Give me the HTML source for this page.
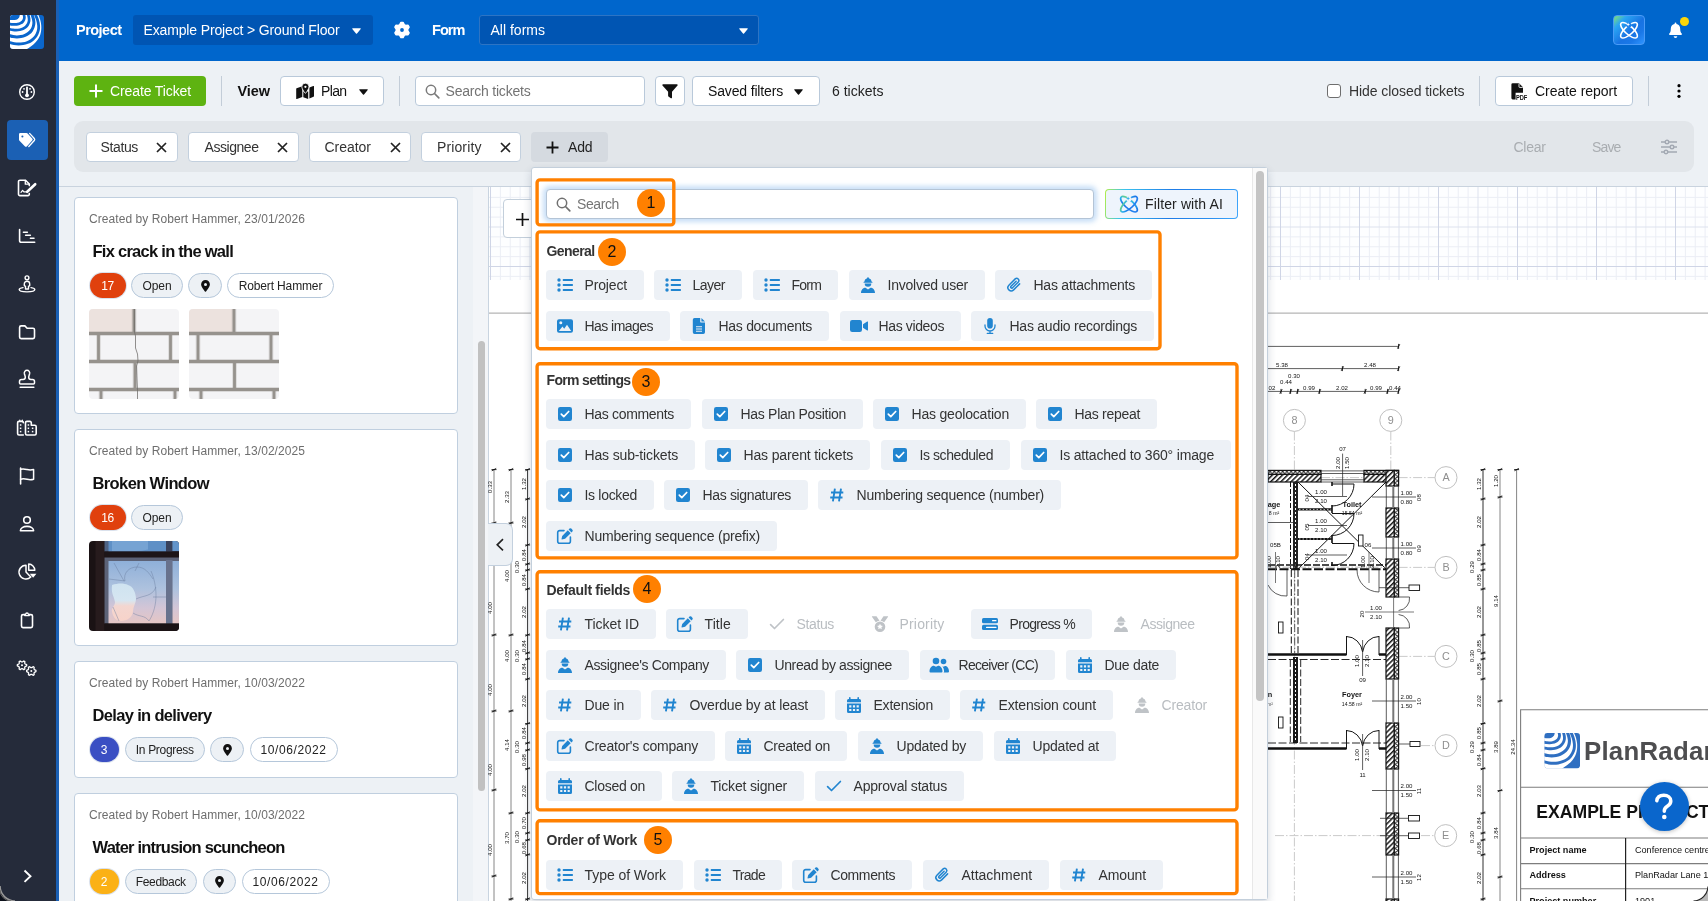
<!DOCTYPE html><html><head><meta charset="utf-8"><title>Tickets</title><style>
*{box-sizing:border-box;margin:0;padding:0}
html,body{width:1708px;height:901px;overflow:hidden;background:#edf1f5;font-family:"Liberation Sans",sans-serif;color:#252525}
body{position:relative}
#wrap{position:absolute;left:0;top:0;width:1708px;height:901px;overflow:hidden;will-change:transform}
.abs{position:absolute}
.t{position:absolute;white-space:nowrap;line-height:1}
svg{display:block;overflow:visible}
#side{left:0;top:0;width:56px;height:901px;background:#252b3a}
#strip{left:56px;top:0;width:3px;height:901px;background:#1b60b4}
#top{left:59px;top:0;width:1649px;height:61px;background:#0066cc}
.sel{background:#0055b3;border-radius:3px;height:30px;top:15px}
.btn{background:#fff;border:1px solid #b9c9da;border-radius:4px;height:30px;top:76px}
.sep{width:1px;background:#c3cdd8;top:76px;height:30px}
#fbar{left:74px;top:121px;width:1620px;height:51px;background:#e2e6ea;border-radius:9px}
.fchip{background:#fff;border:1px solid #c3d0de;border-radius:4px;height:30px;top:132px}
.card{background:#fff;border:1px solid #c0cfdf;border-radius:4px;left:74px;width:384px}
.pill{height:25px;border-radius:13px;border:1px solid #b5c7da;background:#edf1f5}
.pill.w{background:#fff}
.chip{position:absolute;height:30px;border-radius:4px;background:#edf1f6;color:#333}
.chip.dis{background:transparent;color:#b9bdc1}
.chip .ic{position:absolute;left:11px;top:7px;width:16px;height:16px;color:#2185d0;fill:currentColor}
.chip.dis .ic{color:#bfc3c7}
.chip .tx{position:absolute;left:38.500px;top:0;line-height:30px;white-space:nowrap}
.num{position:absolute;width:28px;height:28px;border-radius:14px;background:#ff8000;color:#111;text-align:center;line-height:27.500px;font-size:16px}
.hd{position:absolute;white-space:nowrap;line-height:1;color:#333}
</style></head><body><div id="wrap"><div class="abs" style="left:488px;top:187px;width:1220px;height:714px;background:#fff;border-left:1px solid #c9d4e0"></div><svg class="abs" style="left:489px;top:187px" width="1219" height="93" viewBox="489 187 1219 93"><rect x="489" y="187" width="1219" height="93" fill="#fdfeff"/><path d="M500.38 187V280M510.25 187V280M520.12 187V280M539.88 187V280M549.75 187V280M559.62 187V280M579.38 187V280M589.25 187V280M599.12 187V280M618.88 187V280M628.75 187V280M638.62 187V280M658.38 187V280M668.25 187V280M678.12 187V280M697.88 187V280M707.75 187V280M717.62 187V280M737.38 187V280M747.25 187V280M757.12 187V280M776.88 187V280M786.75 187V280M796.62 187V280M816.38 187V280M826.25 187V280M836.12 187V280M855.88 187V280M865.75 187V280M875.62 187V280M895.38 187V280M905.25 187V280M915.12 187V280M934.88 187V280M944.75 187V280M954.62 187V280M974.38 187V280M984.25 187V280M994.12 187V280M1013.88 187V280M1023.75 187V280M1033.62 187V280M1053.38 187V280M1063.25 187V280M1073.12 187V280M1092.88 187V280M1102.75 187V280M1112.62 187V280M1132.38 187V280M1142.25 187V280M1152.12 187V280M1171.88 187V280M1181.75 187V280M1191.62 187V280M1211.38 187V280M1221.25 187V280M1231.12 187V280M1250.88 187V280M1260.75 187V280M1270.62 187V280M1290.38 187V280M1300.25 187V280M1310.12 187V280M1329.88 187V280M1339.75 187V280M1349.62 187V280M1369.38 187V280M1379.25 187V280M1389.12 187V280M1408.88 187V280M1418.75 187V280M1428.62 187V280M1448.38 187V280M1458.25 187V280M1468.12 187V280M1487.88 187V280M1497.75 187V280M1507.62 187V280M1527.38 187V280M1537.25 187V280M1547.12 187V280M1566.88 187V280M1576.75 187V280M1586.62 187V280M1606.38 187V280M1616.25 187V280M1626.12 187V280M1645.88 187V280M1655.75 187V280M1665.62 187V280M1685.38 187V280M1695.25 187V280M1705.12 187V280M489 197.38H1708M489 207.25H1708M489 217.12H1708M489 236.88H1708M489 246.75H1708M489 256.62H1708M489 276.38H1708" stroke="#ebeef5" stroke-width="1" fill="none"/><path d="M530.00 187V280M609.00 187V280M688.00 187V280M767.00 187V280M846.00 187V280M925.00 187V280M1004.00 187V280M1083.00 187V280M1162.00 187V280M1241.00 187V280M1320.00 187V280M1399.00 187V280M1478.00 187V280M1557.00 187V280M1636.00 187V280M489 227.00H1708" stroke="#dde2ee" stroke-width="1" fill="none"/><path d="M490.50 187V280M569.50 187V280M648.50 187V280M727.50 187V280M806.50 187V280M885.50 187V280M964.50 187V280M1043.50 187V280M1122.50 187V280M1201.50 187V280M1280.50 187V280M1359.50 187V280M1438.50 187V280M1517.50 187V280M1596.50 187V280M1675.50 187V280M489 266.50H1708" stroke="#cfd5e6" stroke-width="1" fill="none"/></svg><div class="abs" style="left:503px;top:199px;width:38px;height:39px;background:#fff;border:1px solid #c3cfdb;border-radius:4px"></div><svg class="abs" style="left:515.500px;top:212.500px" width="13" height="13" viewBox="0 0 13 13"><path d="M6.500 0v13M0 6.500h13" stroke="#111" stroke-width="1.700" fill="none"/></svg><svg class="abs" style="left:489px;top:281px" width="1219" height="620" viewBox="489 281 1219 620" font-family="Liberation Sans, sans-serif"><defs><pattern id="hat" width="3.600" height="3.600" patternUnits="userSpaceOnUse" patternTransform="rotate(-45)"><rect width="3.600" height="3.600" fill="#fff"/><rect width="3.600" height="1.500" fill="#1a1a1a"/></pattern><pattern id="ins" width="4.200" height="4" patternUnits="userSpaceOnUse" x="1268" y="470.400"><rect width="4.200" height="4" fill="#fff"/><path d="M0 4L2.100 0.300L4.200 4" stroke="#1a1a1a" stroke-width=".9" fill="none"/></pattern><pattern id="insv" width="4.300" height="4.200" patternUnits="userSpaceOnUse" x="1394.300" y="470.400"><rect width="4.300" height="4.200" fill="#fff"/><path d="M0 0L4 2.100L0 4.200" stroke="#1a1a1a" stroke-width=".9" fill="none"/></pattern></defs><path d="M489 313.200H1708" stroke="#b5b5b5" stroke-width="1.200"/><path d="M1268 346.400H1398.600M1268 368.600H1398.600M1268 391.400H1398.600" stroke="#2a2a2a" stroke-width=".75" fill="none"/><path d="M1397.3999999999999 348.59999999999997L1399.8 344.2M1398.6 343.9V348.9M1341.2 370.8L1343.6000000000001 366.40000000000003M1342.4 366.1V371.1M1397.3999999999999 370.8L1399.8 366.40000000000003M1398.6 366.1V371.1M1279.8 393.59999999999997L1282.2 389.2M1281 388.9V393.9M1289.3999999999999 393.59999999999997L1291.8 389.2M1290.6 388.9V393.9M1296.3999999999999 393.59999999999997L1298.8 389.2M1297.6 388.9V393.9M1318.3999999999999 393.59999999999997L1320.8 389.2M1319.6 388.9V393.9M1364.0 393.59999999999997L1366.4 389.2M1365.2 388.9V393.9M1386.3999999999999 393.59999999999997L1388.8 389.2M1387.6 388.9V393.9M1397.3999999999999 393.59999999999997L1399.8 389.2M1398.6 388.9V393.9" stroke="#111" stroke-width=".9" fill="none"/><text x="1282" y="367" font-size="6.1" text-anchor="middle" fill="#151515">5.38</text><text x="1370" y="367" font-size="6.1" text-anchor="middle" fill="#151515">2.48</text><text x="1272" y="390" font-size="6.1" text-anchor="middle" fill="#151515">02</text><text x="1286" y="384" font-size="6.1" text-anchor="middle" fill="#151515">0.44</text><text x="1294" y="377.5" font-size="6.1" text-anchor="middle" fill="#151515">0.30</text><text x="1309" y="390" font-size="6.1" text-anchor="middle" fill="#151515">0.99</text><text x="1342" y="390" font-size="6.1" text-anchor="middle" fill="#151515">2.02</text><text x="1376" y="390" font-size="6.1" text-anchor="middle" fill="#151515">0.99</text><text x="1395" y="390" font-size="6.1" text-anchor="middle" fill="#151515">0.44</text><circle cx="1294.4" cy="420.4" r="11" fill="#fff" stroke="#b9b9b9" stroke-width=".9"/><text x="1294.4" y="424.2" font-size="10.8" text-anchor="middle" fill="#8f8f8f">8</text><circle cx="1390.8" cy="420.4" r="11" fill="#fff" stroke="#b9b9b9" stroke-width=".9"/><text x="1390.8" y="424.2" font-size="10.8" text-anchor="middle" fill="#8f8f8f">9</text><circle cx="1446" cy="477.6" r="11" fill="#fff" stroke="#b9b9b9" stroke-width=".9"/><text x="1446" y="481.40000000000003" font-size="10.8" text-anchor="middle" fill="#8f8f8f">A</text><circle cx="1446" cy="567.4" r="11" fill="#fff" stroke="#b9b9b9" stroke-width=".9"/><text x="1446" y="571.1999999999999" font-size="10.8" text-anchor="middle" fill="#8f8f8f">B</text><circle cx="1446" cy="656.4" r="11" fill="#fff" stroke="#b9b9b9" stroke-width=".9"/><text x="1446" y="660.1999999999999" font-size="10.8" text-anchor="middle" fill="#8f8f8f">C</text><circle cx="1446" cy="745.6" r="11" fill="#fff" stroke="#b9b9b9" stroke-width=".9"/><text x="1446" y="749.4" font-size="10.8" text-anchor="middle" fill="#8f8f8f">D</text><circle cx="1445.7" cy="835.6" r="11" fill="#fff" stroke="#b9b9b9" stroke-width=".9"/><text x="1445.7" y="839.4" font-size="10.8" text-anchor="middle" fill="#8f8f8f">E</text><path d="M1294.400 431.500V901M1390.800 431.500V470M1398.600 477.600H1435M1321 477.600H1364M1398.600 567.400H1435M1398.600 656.400H1435M1421 745.600H1435M1275 835.600H1386M1421 835.600H1435" stroke="#c4c4c4" stroke-width=".9" fill="none" stroke-dasharray="9 2 1.500 2"/><path d="M1483 469V901" stroke="#1a1a1a" stroke-width=".9" fill="none"/><path d="M1500 469V901M1516.600 469V901" stroke="#444" stroke-width=".65" fill="none"/><path d="M1480.8 470.8L1485.2 468.40000000000003M1480.5 469.6H1485.5M1480.8 500.2L1485.2 497.8M1480.5 499H1485.5M1480.8 546.2L1485.2 543.8M1480.5 545H1485.5M1480.8 565.2L1485.2 562.8M1480.5 564H1485.5M1480.8 571.2L1485.2 568.8M1480.5 570H1485.5M1480.8 590.2L1485.2 587.8M1480.5 589H1485.5M1480.8 636.2L1485.2 633.8M1480.5 635H1485.5M1480.8 654.2L1485.2 651.8M1480.5 653H1485.5M1480.8 660.2L1485.2 657.8M1480.5 659H1485.5M1480.8 680.2L1485.2 677.8M1480.5 679H1485.5M1480.8 724.8000000000001L1485.2 722.4M1480.5 723.6H1485.5M1480.8 744.2L1485.2 741.8M1480.5 743H1485.5M1480.8 751.2L1485.2 748.8M1480.5 750H1485.5M1480.8 769.9000000000001L1485.2 767.5M1480.5 768.7H1485.5M1480.8 814.2L1485.2 811.8M1480.5 813H1485.5M1480.8 834.2L1485.2 831.8M1480.5 833H1485.5M1480.8 841.2L1485.2 838.8M1480.5 840H1485.5M1480.8 856.0L1485.2 853.5999999999999M1480.5 854.8H1485.5M1480.8 900.2L1485.2 897.8M1480.5 899H1485.5M1497.8 470.8L1502.2 468.40000000000003M1497.5 469.6H1502.5M1497.8 498.2L1502.2 495.8M1497.5 497H1502.5M1497.8 702.2L1502.2 699.8M1497.5 701H1502.5M1497.8 791.8000000000001L1502.2 789.4M1497.5 790.6H1502.5M1497.8 878.2L1502.2 875.8M1497.5 877H1502.5M1514.3999999999999 470.8L1518.8 468.40000000000003M1514.1 469.6H1519.1" stroke="#111" stroke-width=".9" fill="none"/><text x="1481" y="484" font-size="6.1" text-anchor="middle" fill="#151515" transform="rotate(-90 1481 484)">1.32</text><text x="1481" y="522" font-size="6.1" text-anchor="middle" fill="#151515" transform="rotate(-90 1481 522)">2.02</text><text x="1481" y="555" font-size="6.1" text-anchor="middle" fill="#151515" transform="rotate(-90 1481 555)">0.84</text><text x="1474" y="567" font-size="6.1" text-anchor="middle" fill="#151515" transform="rotate(-90 1474 567)">0.29</text><text x="1481" y="580" font-size="6.1" text-anchor="middle" fill="#151515" transform="rotate(-90 1481 580)">0.85</text><text x="1481" y="612" font-size="6.1" text-anchor="middle" fill="#151515" transform="rotate(-90 1481 612)">2.02</text><text x="1481" y="646" font-size="6.1" text-anchor="middle" fill="#151515" transform="rotate(-90 1481 646)">0.85</text><text x="1474" y="656" font-size="6.1" text-anchor="middle" fill="#151515" transform="rotate(-90 1474 656)">0.30</text><text x="1481" y="669" font-size="6.1" text-anchor="middle" fill="#151515" transform="rotate(-90 1481 669)">0.85</text><text x="1481" y="701" font-size="6.1" text-anchor="middle" fill="#151515" transform="rotate(-90 1481 701)">2.02</text><text x="1481" y="733" font-size="6.1" text-anchor="middle" fill="#151515" transform="rotate(-90 1481 733)">0.85</text><text x="1474" y="747" font-size="6.1" text-anchor="middle" fill="#151515" transform="rotate(-90 1474 747)">0.29</text><text x="1481" y="760" font-size="6.1" text-anchor="middle" fill="#151515" transform="rotate(-90 1481 760)">0.84</text><text x="1481" y="791" font-size="6.1" text-anchor="middle" fill="#151515" transform="rotate(-90 1481 791)">2.03</text><text x="1481" y="823" font-size="6.1" text-anchor="middle" fill="#151515" transform="rotate(-90 1481 823)">0.84</text><text x="1474" y="837" font-size="6.1" text-anchor="middle" fill="#151515" transform="rotate(-90 1474 837)">0.30</text><text x="1481" y="848" font-size="6.1" text-anchor="middle" fill="#151515" transform="rotate(-90 1481 848)">0.68</text><text x="1481" y="878" font-size="6.1" text-anchor="middle" fill="#151515" transform="rotate(-90 1481 878)">2.02</text><text x="1498" y="481" font-size="6.1" text-anchor="middle" fill="#151515" transform="rotate(-90 1498 481)">1.20</text><text x="1498" y="601" font-size="6.1" text-anchor="middle" fill="#151515" transform="rotate(-90 1498 601)">9.14</text><text x="1498" y="747" font-size="6.1" text-anchor="middle" fill="#151515" transform="rotate(-90 1498 747)">3.89</text><text x="1498" y="833" font-size="6.1" text-anchor="middle" fill="#151515" transform="rotate(-90 1498 833)">3.84</text><text x="1514.6" y="747" font-size="6.1" text-anchor="middle" fill="#151515" transform="rotate(-90 1514.6 747)">24.34</text><path d="M527.600 469V901" stroke="#1a1a1a" stroke-width=".9" fill="none"/><path d="M494 469V901M511 469V901" stroke="#444" stroke-width=".65" fill="none"/><path d="M525.4 470.8L529.8000000000001 468.40000000000003M525.1 469.6H530.1M525.4 500.2L529.8000000000001 497.8M525.1 499H530.1M525.4 546.2L529.8000000000001 543.8M525.1 545H530.1M525.4 565.2L529.8000000000001 562.8M525.1 564H530.1M525.4 571.2L529.8000000000001 568.8M525.1 570H530.1M525.4 590.2L529.8000000000001 587.8M525.1 589H530.1M525.4 636.2L529.8000000000001 633.8M525.1 635H530.1M525.4 654.2L529.8000000000001 651.8M525.1 653H530.1M525.4 660.2L529.8000000000001 657.8M525.1 659H530.1M525.4 680.2L529.8000000000001 677.8M525.1 679H530.1M525.4 724.8000000000001L529.8000000000001 722.4M525.1 723.6H530.1M525.4 744.2L529.8000000000001 741.8M525.1 743H530.1M525.4 751.2L529.8000000000001 748.8M525.1 750H530.1M525.4 769.9000000000001L529.8000000000001 767.5M525.1 768.7H530.1M525.4 814.2L529.8000000000001 811.8M525.1 813H530.1M525.4 834.2L529.8000000000001 831.8M525.1 833H530.1M525.4 841.2L529.8000000000001 838.8M525.1 840H530.1M525.4 856.0L529.8000000000001 853.5999999999999M525.1 854.8H530.1M525.4 900.2L529.8000000000001 897.8M525.1 899H530.1M508.8 470.8L513.2 468.40000000000003M508.5 469.6H513.5M508.8 524.2L513.2 521.8M508.5 523H513.5M508.8 636.2L513.2 633.8M508.5 635H513.5M508.8 712.2L513.2 709.8M508.5 711H513.5M508.8 814.2L513.2 811.8M508.5 813H513.5M508.8 900.2L513.2 897.8M508.5 899H513.5M491.8 470.8L496.2 468.40000000000003M491.5 469.6H496.5M491.8 524.2L496.2 521.8M491.5 523H496.5M491.8 549.2L496.2 546.8M491.5 548H496.5M491.8 636.2L496.2 633.8M491.5 635H496.5M491.8 712.2L496.2 709.8M491.5 711H496.5M491.8 791.2L496.2 788.8M491.5 790H496.5M491.8 877.2L496.2 874.8M491.5 876H496.5" stroke="#111" stroke-width=".9" fill="none"/><text x="525.5" y="484" font-size="6.1" text-anchor="middle" fill="#151515" transform="rotate(-90 525.5 484)">1.32</text><text x="525.5" y="522" font-size="6.1" text-anchor="middle" fill="#151515" transform="rotate(-90 525.5 522)">2.02</text><text x="525.5" y="555" font-size="6.1" text-anchor="middle" fill="#151515" transform="rotate(-90 525.5 555)">0.84</text><text x="518.5" y="567" font-size="6.1" text-anchor="middle" fill="#151515" transform="rotate(-90 518.5 567)">0.30</text><text x="525.5" y="580" font-size="6.1" text-anchor="middle" fill="#151515" transform="rotate(-90 525.5 580)">0.84</text><text x="525.5" y="612" font-size="6.1" text-anchor="middle" fill="#151515" transform="rotate(-90 525.5 612)">2.02</text><text x="525.5" y="646" font-size="6.1" text-anchor="middle" fill="#151515" transform="rotate(-90 525.5 646)">0.84</text><text x="518.5" y="656" font-size="6.1" text-anchor="middle" fill="#151515" transform="rotate(-90 518.5 656)">0.30</text><text x="525.5" y="669" font-size="6.1" text-anchor="middle" fill="#151515" transform="rotate(-90 525.5 669)">0.84</text><text x="525.5" y="701" font-size="6.1" text-anchor="middle" fill="#151515" transform="rotate(-90 525.5 701)">2.02</text><text x="525.5" y="733" font-size="6.1" text-anchor="middle" fill="#151515" transform="rotate(-90 525.5 733)">0.84</text><text x="518.5" y="747" font-size="6.1" text-anchor="middle" fill="#151515" transform="rotate(-90 518.5 747)">0.30</text><text x="525.5" y="760" font-size="6.1" text-anchor="middle" fill="#151515" transform="rotate(-90 525.5 760)">0.98</text><text x="525.5" y="791" font-size="6.1" text-anchor="middle" fill="#151515" transform="rotate(-90 525.5 791)">2.02</text><text x="525.5" y="823" font-size="6.1" text-anchor="middle" fill="#151515" transform="rotate(-90 525.5 823)">0.70</text><text x="518.5" y="837" font-size="6.1" text-anchor="middle" fill="#151515" transform="rotate(-90 518.5 837)">0.30</text><text x="525.5" y="848" font-size="6.1" text-anchor="middle" fill="#151515" transform="rotate(-90 525.5 848)">0.68</text><text x="525.5" y="878" font-size="6.1" text-anchor="middle" fill="#151515" transform="rotate(-90 525.5 878)">2.02</text><text x="508.5" y="497" font-size="6.1" text-anchor="middle" fill="#151515" transform="rotate(-90 508.5 497)">2.33</text><text x="508.5" y="576" font-size="6.1" text-anchor="middle" fill="#151515" transform="rotate(-90 508.5 576)">4.00</text><text x="508.5" y="656" font-size="6.1" text-anchor="middle" fill="#151515" transform="rotate(-90 508.5 656)">4.00</text><text x="508.5" y="745" font-size="6.1" text-anchor="middle" fill="#151515" transform="rotate(-90 508.5 745)">4.14</text><text x="508.5" y="838" font-size="6.1" text-anchor="middle" fill="#151515" transform="rotate(-90 508.5 838)">3.70</text><text x="492" y="487" font-size="6.1" text-anchor="middle" fill="#151515" transform="rotate(-90 492 487)">0.33</text><text x="492" y="608" font-size="6.1" text-anchor="middle" fill="#151515" transform="rotate(-90 492 608)">4.00</text><text x="492" y="690" font-size="6.1" text-anchor="middle" fill="#151515" transform="rotate(-90 492 690)">4.00</text><text x="492" y="770" font-size="6.1" text-anchor="middle" fill="#151515" transform="rotate(-90 492 770)">4.00</text><text x="492" y="850" font-size="6.1" text-anchor="middle" fill="#151515" transform="rotate(-90 492 850)">4.00</text><rect x="1268" y="470.400" width="53" height="4" fill="url(#ins)" stroke="#111" stroke-width="1.200"/><rect x="1268" y="474.400" width="53" height="7.600" fill="url(#hat)" stroke="#111" stroke-width="1.200"/><rect x="1364" y="470.400" width="34.59999999999991" height="4" fill="url(#ins)" stroke="#111" stroke-width="1.200"/><rect x="1364" y="474.400" width="22.59999999999991" height="7.600" fill="url(#hat)" stroke="#111" stroke-width="1.200"/><path d="M1321 470.900H1364M1321 473.500H1364M1321 479.800H1364M1321 482H1364" stroke="#2a2a2a" stroke-width=".75" fill="none"/><rect x="1386" y="470.4" width="8.300" height="15.600000000000023" fill="url(#hat)" stroke="#111" stroke-width="1.200"/><rect x="1394.300" y="470.4" width="4.300" height="15.600000000000023" fill="url(#insv)" stroke="#111" stroke-width="1.200"/><rect x="1386" y="508" width="8.300" height="29" fill="url(#hat)" stroke="#111" stroke-width="1.200"/><rect x="1394.300" y="508" width="4.300" height="29" fill="url(#insv)" stroke="#111" stroke-width="1.200"/><rect x="1386" y="559" width="8.300" height="38" fill="url(#hat)" stroke="#111" stroke-width="1.200"/><rect x="1394.300" y="559" width="4.300" height="38" fill="url(#insv)" stroke="#111" stroke-width="1.200"/><rect x="1386" y="628" width="8.300" height="51" fill="url(#hat)" stroke="#111" stroke-width="1.200"/><rect x="1394.300" y="628" width="4.300" height="51" fill="url(#insv)" stroke="#111" stroke-width="1.200"/><rect x="1386" y="723" width="8.300" height="46" fill="url(#hat)" stroke="#111" stroke-width="1.200"/><rect x="1394.300" y="723" width="4.300" height="46" fill="url(#insv)" stroke="#111" stroke-width="1.200"/><rect x="1386" y="813" width="8.300" height="42" fill="url(#hat)" stroke="#111" stroke-width="1.200"/><rect x="1394.300" y="813" width="4.300" height="42" fill="url(#insv)" stroke="#111" stroke-width="1.200"/><rect x="1386" y="899" width="8.300" height="4" fill="url(#hat)" stroke="#111" stroke-width="1.200"/><rect x="1394.300" y="899" width="4.300" height="4" fill="url(#insv)" stroke="#111" stroke-width="1.200"/><path d="M1386.300 486V508M1398.400 486V508" stroke="#333" stroke-width=".8" fill="none"/><path d="M1393.300 486V508" stroke="#777" stroke-width="2" fill="none"/><path d="M1386.300 537V559M1398.400 537V559" stroke="#333" stroke-width=".8" fill="none"/><path d="M1393.300 537V559" stroke="#777" stroke-width="2" fill="none"/><path d="M1386.300 679V723M1398.400 679V723" stroke="#333" stroke-width=".8" fill="none"/><path d="M1393.300 679V723" stroke="#777" stroke-width="2" fill="none"/><path d="M1386.300 769V813M1398.400 769V813" stroke="#333" stroke-width=".8" fill="none"/><path d="M1393.300 769V813" stroke="#777" stroke-width="2" fill="none"/><path d="M1386.300 855V899M1398.400 855V899" stroke="#333" stroke-width=".8" fill="none"/><path d="M1393.300 855V899" stroke="#777" stroke-width="2" fill="none"/><path d="M1393.600 597V628" stroke="#555" stroke-width=".8"/><path d="M1398.600 597H1409.500M1409.500 597A12 12 0 0 1 1398.600 610.500M1398.600 628H1409.500M1409.500 628A12 12 0 0 0 1398.600 614.500" stroke="#2a2a2a" stroke-width=".75" fill="none"/><rect x="1293" y="482" width="5" height="87" fill="#222"/><path d="M1295.500 484V568" stroke="#fff" stroke-width="1" stroke-dasharray="2 2"/><path d="M1290.500 482V569" stroke="#111" stroke-width="1" stroke-dasharray="5 2"/><path d="M1298 509.400H1332M1298 539H1332" stroke="#111" stroke-width="2.200"/><path d="M1299 509.400H1332M1299 539H1332" stroke="#fff" stroke-width=".7" stroke-dasharray="1.500 2"/><path d="M1332 482V486M1332 505V513M1332 535V543M1332 562V566" stroke="#111" stroke-width="1.600"/><path d="M1298 482L1386 569M1386 482L1298 569" stroke="#151515" stroke-width="1" fill="none"/><path d="M1332 484H1354M1354 484A22 22 0 0 1 1332 506M1332 513.500H1354M1354 513.500A22 22 0 0 1 1332 535.500M1332 543.500H1354M1354 543.500A22 22 0 0 1 1332 565.500" stroke="#151515" stroke-width="1" fill="none"/><path d="M1268 565H1386" stroke="#111" stroke-width="1.600" stroke-dasharray="7 2"/><path d="M1268 569.300H1386" stroke="#111" stroke-width="2" stroke-dasharray="9 2.500"/><path d="M1268 567.200H1386" stroke="#999" stroke-width=".7" stroke-dasharray="9 2 1.500 2"/><path d="M1268 585A19 19 0 0 0 1287 596M1287 570V596M1379 570V592M1379 592A22 22 0 0 1 1357 570" stroke="#2a2a2a" stroke-width=".75" fill="none"/><path d="M1275.500 552V583M1369 552V583" stroke="#555" stroke-width=".8"/><path d="M1291.300 570V653M1298 570V653" stroke="#111" stroke-width="1" stroke-dasharray="7 2.500"/><path d="M1294.700 570V653" stroke="#333" stroke-width=".8" stroke-dasharray="8 2 1.500 2"/><rect x="1293" y="657" width="5" height="86" fill="#1a1a1a"/><path d="M1295.500 658V742" stroke="#fff" stroke-width="1" stroke-dasharray="2 2"/><path d="M1290.300 660V742M1300.700 660V742" stroke="#111" stroke-width=".9" stroke-dasharray="7 2.500"/><path d="M1268 654.500H1346.500M1379 654.500H1386" stroke="#111" stroke-width="2.600"/><path d="M1268 659.500H1386" stroke="#111" stroke-width=".9" stroke-dasharray="8 2.500"/><path d="M1346.500 636V655M1379 636V655M1346.500 636.500A16.500 18 0 0 1 1362.600 652M1379 636.500A16.500 18 0 0 0 1362.600 652" stroke="#151515" stroke-width="1" fill="none"/><path d="M1268 748.500H1346.500M1379 748.500H1386" stroke="#111" stroke-width="2.600"/><path d="M1268 743H1386" stroke="#111" stroke-width=".9" stroke-dasharray="8 2.500"/><path d="M1346.500 730V749M1379 730V749M1346.500 730.500A16.500 18 0 0 1 1362.600 746M1379 730.500A16.500 18 0 0 0 1362.600 746" stroke="#151515" stroke-width="1" fill="none"/><path d="M1362.600 640V676M1362.600 734V770M1342.600 453.600V496" stroke="#2a2a2a" stroke-width=".75" fill="none"/><text x="1342.6" y="450.5" font-size="6.1" text-anchor="middle" fill="#151515">07</text><text x="1339.5" y="463" font-size="6.1" text-anchor="middle" fill="#151515" transform="rotate(-90 1339.5 463)">2.00</text><text x="1349" y="463" font-size="6.1" text-anchor="middle" fill="#151515" transform="rotate(-90 1349 463)">1.50</text><text x="1352" y="506.5" font-size="7.3" text-anchor="middle" fill="#151515" font-weight="bold">Toilet</text><text x="1352" y="515" font-size="5.2" text-anchor="middle" fill="#151515">15.54 m²</text><text x="1274" y="506.5" font-size="7.3" text-anchor="middle" fill="#151515" font-weight="bold">age</text><text x="1274" y="515" font-size="5.2" text-anchor="middle" fill="#151515">8 m²</text><text x="1352" y="696.5" font-size="7.3" text-anchor="middle" fill="#151515" font-weight="bold">Foyer</text><text x="1352" y="706" font-size="5.2" text-anchor="middle" fill="#151515">14.58 m²</text><text x="1270" y="696.5" font-size="7.3" text-anchor="middle" fill="#151515" font-weight="bold">n</text><text x="1270" y="706" font-size="4.8" text-anchor="middle" fill="#555">m²</text><path d="M1308 496.5H1347" stroke="#2a2a2a" stroke-width=".75" fill="none"/><text x="1321" y="494.0" font-size="6.1" text-anchor="middle" fill="#151515">1.00</text><text x="1321" y="503.0" font-size="6.1" text-anchor="middle" fill="#151515">2.10</text><text x="1309" y="498.0" font-size="6.1" text-anchor="middle" fill="#151515" transform="rotate(-90 1309 498.0)">04</text><path d="M1308 525.5H1347" stroke="#2a2a2a" stroke-width=".75" fill="none"/><text x="1321" y="523.0" font-size="6.1" text-anchor="middle" fill="#151515">1.00</text><text x="1321" y="532.0" font-size="6.1" text-anchor="middle" fill="#151515">2.10</text><text x="1309" y="527.0" font-size="6.1" text-anchor="middle" fill="#151515" transform="rotate(-90 1309 527.0)">05</text><path d="M1308 555H1347" stroke="#2a2a2a" stroke-width=".75" fill="none"/><text x="1321" y="552.5" font-size="6.1" text-anchor="middle" fill="#151515">1.00</text><text x="1321" y="561.5" font-size="6.1" text-anchor="middle" fill="#151515">2.10</text><text x="1309" y="556.5" font-size="6.1" text-anchor="middle" fill="#151515" transform="rotate(-90 1309 556.5)">04</text><path d="M1372 497H1416" stroke="#2a2a2a" stroke-width=".75" fill="none"/><text x="1406.5" y="494.5" font-size="6.1" text-anchor="middle" fill="#151515">1.00</text><text x="1406.5" y="503.5" font-size="6.1" text-anchor="middle" fill="#151515">0.80</text><text x="1421" y="497.5" font-size="6.1" text-anchor="middle" fill="#151515" transform="rotate(-90 1421 497.5)">08</text><path d="M1372 548H1416" stroke="#2a2a2a" stroke-width=".75" fill="none"/><text x="1406.5" y="545.5" font-size="6.1" text-anchor="middle" fill="#151515">1.00</text><text x="1406.5" y="554.5" font-size="6.1" text-anchor="middle" fill="#151515">0.80</text><text x="1421" y="548.5" font-size="6.1" text-anchor="middle" fill="#151515" transform="rotate(-90 1421 548.5)">09</text><path d="M1372 701H1416" stroke="#2a2a2a" stroke-width=".75" fill="none"/><text x="1406.5" y="698.5" font-size="6.1" text-anchor="middle" fill="#151515">2.00</text><text x="1406.5" y="707.5" font-size="6.1" text-anchor="middle" fill="#151515">1.50</text><text x="1421" y="701.5" font-size="6.1" text-anchor="middle" fill="#151515" transform="rotate(-90 1421 701.5)">10</text><path d="M1372 790.5H1416" stroke="#2a2a2a" stroke-width=".75" fill="none"/><text x="1406.5" y="788.0" font-size="6.1" text-anchor="middle" fill="#151515">2.00</text><text x="1406.5" y="797.0" font-size="6.1" text-anchor="middle" fill="#151515">1.50</text><text x="1421" y="791.0" font-size="6.1" text-anchor="middle" fill="#151515" transform="rotate(-90 1421 791.0)">11</text><path d="M1372 877H1416" stroke="#2a2a2a" stroke-width=".75" fill="none"/><text x="1406.5" y="874.5" font-size="6.1" text-anchor="middle" fill="#151515">2.00</text><text x="1406.5" y="883.5" font-size="6.1" text-anchor="middle" fill="#151515">1.50</text><text x="1421" y="877.5" font-size="6.1" text-anchor="middle" fill="#151515" transform="rotate(-90 1421 877.5)">12</text><path d="M1365 612H1414" stroke="#444" stroke-width=".7"/><text x="1376" y="609.5" font-size="6.1" text-anchor="middle" fill="#151515">1.00</text><text x="1376" y="618.5" font-size="6.1" text-anchor="middle" fill="#151515">2.10</text><text x="1364" y="614" font-size="6.1" text-anchor="middle" fill="#151515" transform="rotate(-90 1364 614)">20</text><text x="1359" y="661" font-size="6.1" text-anchor="middle" fill="#151515" transform="rotate(-90 1359 661)">1.00</text><text x="1368.5" y="661" font-size="6.1" text-anchor="middle" fill="#151515" transform="rotate(-90 1368.5 661)">2.10</text><text x="1362.6" y="682" font-size="6.1" text-anchor="middle" fill="#151515">09</text><text x="1359" y="755" font-size="6.1" text-anchor="middle" fill="#151515" transform="rotate(-90 1359 755)">1.00</text><text x="1368.5" y="755" font-size="6.1" text-anchor="middle" fill="#151515" transform="rotate(-90 1368.5 755)">2.10</text><text x="1362.6" y="777" font-size="6.1" text-anchor="middle" fill="#151515">11</text><text x="1275.5" y="547" font-size="6.1" text-anchor="middle" fill="#151515">05B</text><text x="1271" y="562" font-size="6.1" text-anchor="middle" fill="#151515" transform="rotate(-90 1271 562)">1.00</text><text x="1280" y="562" font-size="6.1" text-anchor="middle" fill="#151515" transform="rotate(-90 1280 562)">2.10</text><text x="1368" y="547" font-size="6.1" text-anchor="middle" fill="#151515">06</text><text x="1365" y="562" font-size="6.1" text-anchor="middle" fill="#151515" transform="rotate(-90 1365 562)">1.00</text><text x="1374" y="562" font-size="6.1" text-anchor="middle" fill="#151515" transform="rotate(-90 1374 562)">2.10</text><rect x="1358.5" y="535" width="4.5" height="11" fill="#fff" stroke="#111" stroke-width=".9"/><rect x="1409" y="585" width="10.6" height="5.5" fill="#fff" stroke="#111" stroke-width=".9"/><rect x="1278.5" y="622" width="4.5" height="11" fill="#fff" stroke="#111" stroke-width=".9"/><rect x="1278.5" y="717" width="4.5" height="11" fill="#fff" stroke="#111" stroke-width=".9"/><rect x="1410" y="741.5" width="10" height="5" fill="#fff" stroke="#111" stroke-width=".9"/><rect x="1408.5" y="815.5" width="11" height="5.5" fill="#fff" stroke="#111" stroke-width=".9"/><rect x="1408.5" y="833" width="11" height="5.5" fill="#fff" stroke="#111" stroke-width=".9"/><path d="M1379 587.700H1409M1398.600 744H1410M1380 818.300H1408.500M1380 835.700H1408.500M1268 522.500H1293" stroke="#2a2a2a" stroke-width=".75" fill="none"/><path d="M1520.600 901V709.700H1708M1520.600 787.200H1708M1520.600 838H1708M1520.600 863.600H1708M1520.600 888.800H1708" stroke="#7d7d7d" stroke-width="1.100" fill="none"/><path d="M1625.600 838V901" stroke="#222" stroke-width="1.200"/><text x="1584" y="760.400" font-size="25.800" font-weight="bold" fill="#4e4e50" letter-spacing=".25">PlanRadar</text><text x="1536.300" y="818.300" font-size="17.600" font-weight="bold" fill="#111">EXAMPLE PROJECT</text><text x="1529.500" y="853" font-size="9.100" font-weight="bold" fill="#111">Project name</text><text x="1635" y="853" font-size="9.100" fill="#111">Conference centre</text><text x="1529.500" y="878.3" font-size="9.100" font-weight="bold" fill="#111">Address</text><text x="1635" y="878.3" font-size="9.100" fill="#111">PlanRadar Lane 1</text><text x="1529.500" y="903.5" font-size="9.100" font-weight="bold" fill="#111">Project number</text><text x="1635" y="903.5" font-size="9.100" fill="#111">1901</text></svg><svg class="abs" style="left:1543.5px;top:733px" width="36.5" height="35.5" viewBox="0 0 34 34"><defs><clipPath id="lc2"><rect width="34" height="34" rx="3"/></clipPath></defs><g clip-path="url(#lc2)"><rect width="34" height="34" fill="#2f6fc1"/><path d="M28.00,-1.00 C28.07,-0.83 28.03,-0.95 28.40,0.00 C28.77,0.95 29.73,3.05 30.20,4.70 C30.67,6.35 31.03,8.17 31.20,9.90 C31.37,11.63 31.37,13.43 31.20,15.10 C31.03,16.77 30.70,18.43 30.20,19.90 C29.70,21.37 29.00,22.63 28.20,23.90 C27.40,25.17 26.47,26.37 25.40,27.50 C24.33,28.63 23.07,29.70 21.80,30.70 C20.53,31.70 18.85,32.78 17.80,33.50 C16.75,34.22 15.88,34.75 15.50,35.00 L-1,35 L-1,-1Z" fill="#fff"/><path d="M9.90,-1.00 C9.88,-0.83 9.95,-0.62 9.80,0.00 C9.65,0.62 9.60,1.92 9.00,2.70 C8.40,3.48 7.20,4.30 6.20,4.70 C5.20,5.10 4.03,5.07 3.00,5.10 C1.97,5.13 0.67,4.95 0.00,4.90 C-0.67,4.85 -0.83,4.82 -1.00,4.80 L-1,-1Z" fill="#2f6fc1"/><path d="M14.00,-1.00 C14.00,-0.83 13.93,-0.55 14.00,0.00 C14.07,0.55 14.42,1.52 14.40,2.30 C14.38,3.08 14.20,3.97 13.90,4.70 C13.60,5.43 13.15,6.13 12.60,6.70 C12.05,7.27 11.40,7.70 10.60,8.10 C9.80,8.50 8.73,8.88 7.80,9.10 C6.87,9.32 5.93,9.37 5.00,9.40 C4.07,9.43 3.03,9.37 2.20,9.30 C1.37,9.23 0.53,9.08 0.00,9.00 C-0.53,8.92 -0.83,8.83 -1.00,8.80" fill="none" stroke="#2f6fc1" stroke-width="2.7"/><path d="M18.10,-1.00 C18.13,-0.83 18.15,-0.68 18.30,0.00 C18.45,0.68 18.88,2.05 19.00,3.10 C19.12,4.15 19.20,5.23 19.00,6.30 C18.80,7.37 18.33,8.57 17.80,9.50 C17.27,10.43 16.60,11.20 15.80,11.90 C15.00,12.60 14.00,13.23 13.00,13.70 C12.00,14.17 10.93,14.47 9.80,14.70 C8.67,14.93 7.33,15.07 6.20,15.10 C5.07,15.13 4.03,15.02 3.00,14.90 C1.97,14.78 0.67,14.52 0.00,14.40 C-0.67,14.28 -0.83,14.23 -1.00,14.20" fill="none" stroke="#2f6fc1" stroke-width="2.7"/><path d="M21.90,-1.00 C21.95,-0.83 21.95,-0.82 22.20,0.00 C22.45,0.82 23.12,2.58 23.40,3.90 C23.68,5.22 23.93,6.57 23.90,7.90 C23.87,9.23 23.62,10.63 23.20,11.90 C22.78,13.17 22.17,14.43 21.40,15.50 C20.63,16.57 19.67,17.50 18.60,18.30 C17.53,19.10 16.27,19.77 15.00,20.30 C13.73,20.83 12.33,21.23 11.00,21.50 C9.67,21.77 8.33,21.88 7.00,21.90 C5.67,21.92 4.17,21.78 3.00,21.60 C1.83,21.42 0.67,20.98 0.00,20.80 C-0.67,20.62 -0.83,20.55 -1.00,20.50" fill="none" stroke="#2f6fc1" stroke-width="3"/><path d="M25.20,-1.00 C25.27,-0.83 25.20,-1.02 25.60,0.00 C26.00,1.02 27.10,3.38 27.60,5.10 C28.10,6.82 28.47,8.63 28.60,10.30 C28.73,11.97 28.67,13.63 28.40,15.10 C28.13,16.57 27.63,17.83 27.00,19.10 C26.37,20.37 25.53,21.63 24.60,22.70 C23.67,23.77 22.60,24.70 21.40,25.50 C20.20,26.30 18.80,26.97 17.40,27.50 C16.00,28.03 14.47,28.45 13.00,28.70 C11.53,28.95 10.07,29.00 8.60,29.00 C7.13,29.00 5.63,28.93 4.20,28.70 C2.77,28.47 0.87,27.83 0.00,27.60 C-0.87,27.37 -0.83,27.35 -1.00,27.30" fill="none" stroke="#2f6fc1" stroke-width="2.8"/></g></svg><div class="abs" style="left:488px;top:522.500px;width:25px;height:43.500px;background:#edf1f5;border:1px solid #c3d0de;border-left:none;border-radius:0 7px 7px 0"></div><svg class="abs" style="left:495.500px;top:537.500px" width="8" height="14" viewBox="0 0 8 14"><path d="M7 1.200L1.200 6.800 7 12.400" fill="none" stroke="#222" stroke-width="1.600"/></svg><div class="abs" style="left:1639.500px;top:781.500px;width:49.500px;height:49.500px;border-radius:25px;background:#0a66cc;box-shadow:0 1px 4px rgba(0,0,0,.25)"></div><svg class="abs" style="left:1654px;top:793px" width="20" height="27" viewBox="0 0 20 27"><path d="M2.800 7.800c.4-3.600 3.200-5.600 7-5.600 4 0 7 2.300 7 5.800 0 2.600-1.500 4-3.500 5.300-2 1.300-3 2.300-3 4.500v.5" fill="none" stroke="#fff" stroke-width="3.500" stroke-linecap="round"/><circle cx="10.300" cy="24" r="2.300" fill="#fff"/></svg><div class="abs" style="left:59px;top:186px;width:1649px;height:1px;background:#c9d3de"></div><div class="abs" style="left:473px;top:187px;width:15px;height:714px;background:#f3f5f8"></div><div class="abs" style="left:478px;top:341px;width:7px;height:450px;border-radius:4px;background:#c1c1c1"></div><div class="abs card" style="top:197px;height:217px"></div><div class="t" style="left:89px;top:212.5px;color:#6e6e6e;font-size:12px;letter-spacing:0.071px;">Created by Robert Hammer, 23/01/2026</div><div class="t" style="left:92.500px;top:243px;color:#111;font-size:16.5px;letter-spacing:-0.733px;font-weight:bold;">Fix crack in the wall</div><div class="abs" style="left:89.5px;top:273px;width:36px;height:25px;border-radius:13px;background:#e0400d;box-shadow:0 0 0 1px rgba(150,170,200,.35)"></div><div class="t" style="left:101.25px;top:280px;color:#fff;font-size:12px;letter-spacing:-0.423px;">17</div><div class="abs pill" style="left:131px;top:273px;width:52px"></div><div class="t" style="left:142.5px;top:280px;color:#222;font-size:12px;letter-spacing:-0.089px;">Open</div><div class="abs pill" style="left:188px;top:273px;width:34px"></div><svg class="abs" style="left:200.5px;top:280px" width="9" height="12" viewBox="0 0 9 12"><path d="M4.500 0a4.400 4.400 0 0 0-4.400 4.400c0 2 2.800 5.600 3.900 7a.6.600 0 0 0 1 0c1.100-1.400 3.900-5 3.900-7a4.400 4.400 0 0 0-4.400-4.400zm0 2.900a1.500 1.500 0 1 1 0 3 1.500 1.500 0 0 1 0-3z" fill="#111"/></svg><div class="abs pill w" style="left:227px;top:273px;width:107px"></div><div class="t" style="left:238.75px;top:280px;color:#222;font-size:12px;letter-spacing:-0.143px;">Robert Hammer</div><svg class="abs" style="left:89px;top:309px" width="90" height="90" viewBox="0 0 90 90"><defs><clipPath id="b1"><rect width="90" height="90" rx="4"/></clipPath></defs><g clip-path="url(#b1)"><rect width="90" height="90" fill="#f4f4f6"/><rect x="0" y="0" width="45" height="23" fill="#ece2de"/><rect x="0" y="30" width="90" height="22" fill="#f4f4f6"/><rect x="0" y="23.0" width="90" height="3" fill="#9a9691"/><rect x="0" y="22.0" width="90" height="5" fill="#8d8984" opacity=".25"/><rect x="0" y="51.0" width="90" height="3" fill="#9a9691"/><rect x="0" y="50.0" width="90" height="5" fill="#8d8984" opacity=".25"/><rect x="0" y="79.0" width="90" height="3" fill="#9a9691"/><rect x="0" y="78.0" width="90" height="5" fill="#8d8984" opacity=".25"/><rect x="43.6" y="0" width="2.800" height="23" fill="#9a9691"/><rect x="42.6" y="0" width="4.800" height="23" fill="#8a8681" opacity=".22"/><rect x="8.1" y="26" width="2.800" height="25" fill="#9a9691"/><rect x="7.1" y="26" width="4.800" height="25" fill="#8a8681" opacity=".22"/><rect x="80.1" y="26" width="2.800" height="25" fill="#9a9691"/><rect x="79.1" y="26" width="4.800" height="25" fill="#8a8681" opacity=".22"/><rect x="44.6" y="54" width="2.800" height="25" fill="#9a9691"/><rect x="43.6" y="54" width="4.800" height="25" fill="#8a8681" opacity=".22"/><rect x="10.6" y="82" width="2.800" height="8" fill="#9a9691"/><rect x="9.6" y="82" width="4.800" height="8" fill="#8a8681" opacity=".22"/><rect x="84.6" y="82" width="2.800" height="8" fill="#9a9691"/><rect x="83.6" y="82" width="4.800" height="8" fill="#8a8681" opacity=".22"/><path d="M45.500 0v23l1 4 0 12 2 6 .5 7-1.500 5 .5 14 .5 10v9" stroke="#6e6b68" stroke-width=".75" fill="none"/></g></svg><svg class="abs" style="left:189px;top:309px" width="90" height="90" viewBox="0 0 90 90"><defs><clipPath id="b2"><rect width="90" height="90" rx="4"/></clipPath></defs><g clip-path="url(#b2)"><rect width="90" height="90" fill="#f4f4f6"/><rect x="0" y="0" width="45" height="23" fill="#ece2de"/><rect x="0" y="30" width="90" height="22" fill="#f4f4f6"/><rect x="0" y="23.0" width="90" height="3" fill="#9a9691"/><rect x="0" y="22.0" width="90" height="5" fill="#8d8984" opacity=".25"/><rect x="0" y="51.0" width="90" height="3" fill="#9a9691"/><rect x="0" y="50.0" width="90" height="5" fill="#8d8984" opacity=".25"/><rect x="0" y="79.0" width="90" height="3" fill="#9a9691"/><rect x="0" y="78.0" width="90" height="5" fill="#8d8984" opacity=".25"/><rect x="43.6" y="0" width="2.800" height="23" fill="#9a9691"/><rect x="42.6" y="0" width="4.800" height="23" fill="#8a8681" opacity=".22"/><rect x="7.6" y="26" width="2.800" height="25" fill="#9a9691"/><rect x="6.6" y="26" width="4.800" height="25" fill="#8a8681" opacity=".22"/><rect x="80.6" y="26" width="2.800" height="25" fill="#9a9691"/><rect x="79.6" y="26" width="4.800" height="25" fill="#8a8681" opacity=".22"/><rect x="44.1" y="54" width="2.800" height="25" fill="#9a9691"/><rect x="43.1" y="54" width="4.800" height="25" fill="#8a8681" opacity=".22"/><rect x="10.6" y="82" width="2.800" height="8" fill="#9a9691"/><rect x="9.6" y="82" width="4.800" height="8" fill="#8a8681" opacity=".22"/><rect x="83.6" y="82" width="2.800" height="8" fill="#9a9691"/><rect x="82.6" y="82" width="4.800" height="8" fill="#8a8681" opacity=".22"/></g></svg><div class="abs card" style="top:429px;height:217px"></div><div class="t" style="left:89px;top:444.5px;color:#6e6e6e;font-size:12px;letter-spacing:0.071px;">Created by Robert Hammer, 13/02/2025</div><div class="t" style="left:92.500px;top:475px;color:#111;font-size:16.5px;letter-spacing:-0.616px;font-weight:bold;">Broken Window</div><div class="abs" style="left:89.5px;top:505px;width:36px;height:25px;border-radius:13px;background:#e0400d;box-shadow:0 0 0 1px rgba(150,170,200,.35)"></div><div class="t" style="left:101.25px;top:512px;color:#fff;font-size:12px;letter-spacing:-0.423px;">16</div><div class="abs pill" style="left:131px;top:505px;width:52px"></div><div class="t" style="left:142.5px;top:512px;color:#222;font-size:12px;letter-spacing:-0.089px;">Open</div><svg class="abs" style="left:89px;top:541px" width="90" height="90" viewBox="0 0 90 90"><defs><clipPath id="wc"><rect width="90" height="90" rx="4"/></clipPath><linearGradient id="sky" x1="0" y1="0" x2="0" y2="1"><stop offset="0" stop-color="#8fb0d9"/><stop offset=".45" stop-color="#aec2de"/><stop offset=".75" stop-color="#d3c5d6"/><stop offset="1" stop-color="#e6c6c4"/></linearGradient><linearGradient id="hole" x1="0" y1="0" x2="0" y2="1"><stop offset="0" stop-color="#cfe3f0"/><stop offset=".45" stop-color="#d6e6f1"/><stop offset=".6" stop-color="#f3d6d0"/><stop offset="1" stop-color="#f7d3c9"/></linearGradient></defs><g clip-path="url(#wc)"><rect width="90" height="90" fill="#1a1214"/><rect x="6.500" y="0" width="9" height="90" fill="#271b1d"/><rect x="15.500" y="0" width="74.500" height="10.500" fill="#4f6384"/><rect x="19.500" y="0" width="57.500" height="10.500" fill="#5f90c6"/><path d="M23 0h36v8.500q-8 2-16 1.500h-20z" fill="#76a3d3"/><rect x="77" y="0" width="6.500" height="10.500" fill="#39425c"/><rect x="83.500" y="0" width="6.500" height="10" fill="#6395cb"/><rect x="15.500" y="10.500" width="74.500" height="6" fill="#1d1518"/><rect x="15.500" y="16.500" width="74.500" height="66" fill="#5c6277"/><rect x="19.500" y="20" width="57.500" height="62.500" fill="url(#sky)"/><rect x="77" y="19" width="6.500" height="63.500" fill="#68728d"/><rect x="83.500" y="20" width="6.500" height="62.500" fill="url(#sky)"/><path d="M23 44c6-2 12-2 16 0 5 1 8 8 8 14 0 4-3 8-3 12 0 6-6 10-12 10-5 0-8-4-9-9-1-4 3-6 3-10-1-6-4-8-3-17z" fill="url(#hole)"/><g stroke="#64799b" stroke-width=".55" fill="none" opacity=".75"><path d="M36 40c-2-8 4-14 12-14 8 0 12 6 16 12M47 58c8-4 16-2 20-12M62 30c6 14 8 34-2 50M44 72c6 4 12 2 16 8M20 38l16 2M64 56h13M50 22l-4 8M30 80l-6-14M25 22l10 18"/></g><rect x="15.500" y="82.500" width="74.500" height="7.500" fill="#1b1315"/></g></svg><div class="abs card" style="top:661px;height:117px"></div><div class="t" style="left:89px;top:676.5px;color:#6e6e6e;font-size:12px;letter-spacing:0.071px;">Created by Robert Hammer, 10/03/2022</div><div class="t" style="left:92.500px;top:707px;color:#111;font-size:16.5px;letter-spacing:-0.661px;font-weight:bold;">Delay in delivery</div><div class="abs" style="left:89.5px;top:737px;width:29px;height:25px;border-radius:13px;background:#3a4fc3;box-shadow:0 0 0 1px rgba(150,170,200,.35)"></div><div class="t" style="left:100.75px;top:744px;color:#fff;font-size:12px;letter-spacing:-0.173px;">3</div><div class="abs pill" style="left:124.5px;top:737px;width:80.5px"></div><div class="t" style="left:135.75px;top:744px;color:#222;font-size:12px;letter-spacing:-0.306px;">In Progress</div><div class="abs pill" style="left:210px;top:737px;width:34px"></div><svg class="abs" style="left:222.5px;top:744px" width="9" height="12" viewBox="0 0 9 12"><path d="M4.500 0a4.400 4.400 0 0 0-4.400 4.400c0 2 2.800 5.600 3.900 7a.6.600 0 0 0 1 0c1.100-1.400 3.900-5 3.900-7a4.400 4.400 0 0 0-4.400-4.400zm0 2.900a1.500 1.500 0 1 1 0 3 1.500 1.500 0 0 1 0-3z" fill="#111"/></svg><div class="abs pill w" style="left:249.5px;top:737px;width:88px"></div><div class="t" style="left:260.5px;top:744px;color:#222;font-size:12px;letter-spacing:0.594px;">10/06/2022</div><div class="abs card" style="top:793px;height:140px"></div><div class="t" style="left:89px;top:808.5px;color:#6e6e6e;font-size:12px;letter-spacing:0.071px;">Created by Robert Hammer, 10/03/2022</div><div class="t" style="left:92.500px;top:839px;color:#111;font-size:16.5px;letter-spacing:-0.803px;font-weight:bold;">Water intrusion scuncheon</div><div class="abs" style="left:89.5px;top:869px;width:29px;height:25px;border-radius:13px;background:#fbb116;box-shadow:0 0 0 1px rgba(150,170,200,.35)"></div><div class="t" style="left:100.75px;top:876px;color:#fff;font-size:12px;letter-spacing:-0.173px;">2</div><div class="abs pill" style="left:124.5px;top:869px;width:72.5px"></div><div class="t" style="left:135.75px;top:876px;color:#222;font-size:12px;letter-spacing:-0.337px;">Feedback</div><div class="abs pill" style="left:202.5px;top:869px;width:33.5px"></div><svg class="abs" style="left:214.75px;top:876px" width="9" height="12" viewBox="0 0 9 12"><path d="M4.500 0a4.400 4.400 0 0 0-4.400 4.400c0 2 2.800 5.600 3.900 7a.6.600 0 0 0 1 0c1.100-1.400 3.900-5 3.900-7a4.400 4.400 0 0 0-4.400-4.400zm0 2.900a1.500 1.500 0 1 1 0 3 1.500 1.500 0 0 1 0-3z" fill="#111"/></svg><div class="abs pill w" style="left:241.5px;top:869px;width:88px"></div><div class="t" style="left:252.5px;top:876px;color:#222;font-size:12px;letter-spacing:0.594px;">10/06/2022</div><div id="side" class="abs"></div><div id="top" class="abs"></div><div id="strip" class="abs"></div><svg class="abs" style="left:10px;top:15px" width="34" height="34" viewBox="0 0 34 34"><defs><clipPath id="lc"><rect width="34" height="34" rx="3"/></clipPath></defs><g clip-path="url(#lc)"><rect width="34" height="34" fill="#0a66cc"/><path d="M28.00,-1.00 C28.07,-0.83 28.03,-0.95 28.40,0.00 C28.77,0.95 29.73,3.05 30.20,4.70 C30.67,6.35 31.03,8.17 31.20,9.90 C31.37,11.63 31.37,13.43 31.20,15.10 C31.03,16.77 30.70,18.43 30.20,19.90 C29.70,21.37 29.00,22.63 28.20,23.90 C27.40,25.17 26.47,26.37 25.40,27.50 C24.33,28.63 23.07,29.70 21.80,30.70 C20.53,31.70 18.85,32.78 17.80,33.50 C16.75,34.22 15.88,34.75 15.50,35.00 L-1,35 L-1,-1Z" fill="#fff"/><path d="M9.90,-1.00 C9.88,-0.83 9.95,-0.62 9.80,0.00 C9.65,0.62 9.60,1.92 9.00,2.70 C8.40,3.48 7.20,4.30 6.20,4.70 C5.20,5.10 4.03,5.07 3.00,5.10 C1.97,5.13 0.67,4.95 0.00,4.90 C-0.67,4.85 -0.83,4.82 -1.00,4.80 L-1,-1Z" fill="#0a66cc"/><path d="M14.00,-1.00 C14.00,-0.83 13.93,-0.55 14.00,0.00 C14.07,0.55 14.42,1.52 14.40,2.30 C14.38,3.08 14.20,3.97 13.90,4.70 C13.60,5.43 13.15,6.13 12.60,6.70 C12.05,7.27 11.40,7.70 10.60,8.10 C9.80,8.50 8.73,8.88 7.80,9.10 C6.87,9.32 5.93,9.37 5.00,9.40 C4.07,9.43 3.03,9.37 2.20,9.30 C1.37,9.23 0.53,9.08 0.00,9.00 C-0.53,8.92 -0.83,8.83 -1.00,8.80" fill="none" stroke="#0a66cc" stroke-width="2.7"/><path d="M18.10,-1.00 C18.13,-0.83 18.15,-0.68 18.30,0.00 C18.45,0.68 18.88,2.05 19.00,3.10 C19.12,4.15 19.20,5.23 19.00,6.30 C18.80,7.37 18.33,8.57 17.80,9.50 C17.27,10.43 16.60,11.20 15.80,11.90 C15.00,12.60 14.00,13.23 13.00,13.70 C12.00,14.17 10.93,14.47 9.80,14.70 C8.67,14.93 7.33,15.07 6.20,15.10 C5.07,15.13 4.03,15.02 3.00,14.90 C1.97,14.78 0.67,14.52 0.00,14.40 C-0.67,14.28 -0.83,14.23 -1.00,14.20" fill="none" stroke="#0a66cc" stroke-width="2.7"/><path d="M21.90,-1.00 C21.95,-0.83 21.95,-0.82 22.20,0.00 C22.45,0.82 23.12,2.58 23.40,3.90 C23.68,5.22 23.93,6.57 23.90,7.90 C23.87,9.23 23.62,10.63 23.20,11.90 C22.78,13.17 22.17,14.43 21.40,15.50 C20.63,16.57 19.67,17.50 18.60,18.30 C17.53,19.10 16.27,19.77 15.00,20.30 C13.73,20.83 12.33,21.23 11.00,21.50 C9.67,21.77 8.33,21.88 7.00,21.90 C5.67,21.92 4.17,21.78 3.00,21.60 C1.83,21.42 0.67,20.98 0.00,20.80 C-0.67,20.62 -0.83,20.55 -1.00,20.50" fill="none" stroke="#0a66cc" stroke-width="3"/><path d="M25.20,-1.00 C25.27,-0.83 25.20,-1.02 25.60,0.00 C26.00,1.02 27.10,3.38 27.60,5.10 C28.10,6.82 28.47,8.63 28.60,10.30 C28.73,11.97 28.67,13.63 28.40,15.10 C28.13,16.57 27.63,17.83 27.00,19.10 C26.37,20.37 25.53,21.63 24.60,22.70 C23.67,23.77 22.60,24.70 21.40,25.50 C20.20,26.30 18.80,26.97 17.40,27.50 C16.00,28.03 14.47,28.45 13.00,28.70 C11.53,28.95 10.07,29.00 8.60,29.00 C7.13,29.00 5.63,28.93 4.20,28.70 C2.77,28.47 0.87,27.83 0.00,27.60 C-0.87,27.37 -0.83,27.35 -1.00,27.30" fill="none" stroke="#0a66cc" stroke-width="2.8"/></g></svg><svg class="abs" style="left:0;top:0" width="56" height="901" viewBox="0 0 56 901"><g fill="none" stroke="#fff" stroke-width="1.6" stroke-linecap="round" stroke-linejoin="round"><circle cx="27" cy="92" r="7.300" stroke-width="1.400"/><path d="M27 87.3V94" stroke-width="1.8"/></g><circle cx="27" cy="95.3" r="1.9" fill="#fff"/><circle cx="22.6" cy="92" r="0.9" fill="#fff"/><circle cx="31.4" cy="92" r="0.9" fill="#fff"/><circle cx="24" cy="88.8" r="0.9" fill="#fff"/><circle cx="30" cy="88.8" r="0.9" fill="#fff"/><rect x="7" y="120" width="41" height="40" rx="4" fill="#1b60b4"/><path d="M19 134.3a1.3 1.3 0 0 1 1.3-1.3h6.2a1.6 1.6 0 0 1 1.1.5l4.6 4.9a1.6 1.6 0 0 1 0 2.2l-5.2 5.6a1.5 1.5 0 0 1-2.2 0l-5.3-5.4a1.6 1.6 0 0 1-.5-1.1z" fill="#fff"/><circle cx="22.4" cy="136.5" r="1.05" fill="#1b60b4"/><path d="M29.6 133.4l4.7 5.1a1.5 1.5 0 0 1 0 2l-5.5 6" fill="none" stroke="#fff" stroke-width="1.3" stroke-linecap="round"/><g fill="none" stroke="#fff" stroke-width="1.6" stroke-linecap="round" stroke-linejoin="round"><path d="M29.3 193.5v.7a1.4 1.4 0 0 1-1.4 1.4h-8a1.4 1.4 0 0 1-1.4-1.4v-12.6a1.4 1.4 0 0 1 1.4-1.4h5.6l3.8 3.8v1.6"/><path d="M25.3 180.5v3.7h3.7" stroke-width="1.3"/><path d="M21 192.3l1.6-2 1.3 1.6h2.8" stroke-width="1.2"/><path d="M27.2 191.8l8-7.6" stroke-width="2.6"/></g><g fill="none" stroke="#fff" stroke-width="1.6" stroke-linecap="round" stroke-linejoin="round"><path d="M19.6 229.5v11.3a1.5 1.5 0 0 0 1.5 1.5h13.6"/><path d="M23.4 232.2h4M25.6 235.3h4.8M30.4 238.3h3.6" stroke-width="1.5"/></g><g fill="none" stroke="#fff" stroke-width="1.6" stroke-linecap="round" stroke-linejoin="round"><circle cx="27" cy="277.8" r="1.9" stroke-width="1.4"/><path d="M24.3 284a2.7 2.7 0 0 1 5.4 0v1.6l-1.2.8v2.6h-3v-2.6l-1.2-.8z" stroke-width="1.4"/><path d="M23 287.6c-2.300.4-3.800 1.100-3.800 2 0 1.300 3.500 2.300 7.800 2.300s7.800-1 7.800-2.300c0-.9-1.500-1.600-3.800-2" stroke-width="1.4"/></g><g fill="none" stroke="#fff" stroke-width="1.6" stroke-linecap="round" stroke-linejoin="round"><path d="M19.600 327.400a1.500 1.500 0 0 1 1.500-1.500h3.800l2.200 2.300h5.900a1.500 1.500 0 0 1 1.500 1.500v7.400a1.500 1.500 0 0 1-1.500 1.500h-11.900a1.500 1.500 0 0 1-1.500-1.500z"/></g><g fill="none" stroke="#fff" stroke-width="1.6" stroke-linecap="round" stroke-linejoin="round"><path d="M24.400 373.700a2.700 2.700 0 1 1 5.200 0c-.4 1.300-.9 2.300-.9 3.600 0 1.400.800 2.200 2.200 2.200h1.600a2 2 0 0 1 2 2v1.500a1 1 0 0 1-1 1h-13a1 1 0 0 1-1-1v-1.500a2 2 0 0 1 2-2h1.600c1.400 0 2.200-.8 2.200-2.200 0-1.300-.5-2.300-.9-3.600z" stroke-width="1.5"/><path d="M20.200 387.200h13.600"/></g><g fill="none" stroke="#fff" stroke-width="1.6" stroke-linecap="round" stroke-linejoin="round"><path d="M23.300 435h-4.300a1.400 1.400 0 0 1-1.400-1.400v-10.800a1.400 1.400 0 0 1 1.400-1.400h3a1.400 1.400 0 0 1 1.400 1.400"/><path d="M19.800 421.200v-1M22.300 421.200v-1" stroke-width="1.300"/><path d="M25.500 422.800a1.400 1.400 0 0 1 1.400-1.400h3a1.400 1.400 0 0 1 1.400 1.400v2.500h3.500a1.400 1.400 0 0 1 1.400 1.400v6.900a1.400 1.400 0 0 1-1.400 1.400h-7.900a1.400 1.400 0 0 1-1.400-1.400z"/></g><rect x="19.85" y="424.25" width="1.5" height="1.5" fill="#fff"/><rect x="19.85" y="427.55" width="1.5" height="1.5" fill="#fff"/><rect x="19.85" y="430.85" width="1.5" height="1.5" fill="#fff"/><rect x="27.65" y="424.25" width="1.5" height="1.5" fill="#fff"/><rect x="27.65" y="427.55" width="1.5" height="1.5" fill="#fff"/><rect x="27.65" y="430.85" width="1.5" height="1.5" fill="#fff"/><rect x="31.85" y="427.55" width="1.5" height="1.5" fill="#fff"/><rect x="31.85" y="430.85" width="1.5" height="1.5" fill="#fff"/><g fill="none" stroke="#fff" stroke-width="1.6" stroke-linecap="round" stroke-linejoin="round"><path d="M20.600 468v16"/><path d="M20.600 469.300c2.500-.8 4.300-.3 6.500.2s4.200.6 6.500-.1v9.800c-2.300.700-4.300.600-6.500.1s-4-.9-6.500-.1" stroke-width="1.500"/></g><g fill="none" stroke="#fff" stroke-width="1.6" stroke-linecap="round" stroke-linejoin="round"><circle cx="27" cy="520" r="3.300"/><path d="M20.400 530.800c0-2.600 2.900-4.400 6.600-4.400s6.600 1.800 6.600 4.400z"/></g><g fill="none" stroke="#fff" stroke-width="1.6" stroke-linecap="round" stroke-linejoin="round"><path d="M26 565.200a6.900 6.900 0 1 0 4.800 11.800l-4.800-4.900z" stroke-width="1.500"/><path d="M28.700 564.100v6.100h6.100a6.200 6.200 0 0 0-6.100-6.100z" stroke-width="1.500"/></g><path d="M29.800 573.700h6.600l-3.300 4z" fill="#fff"/><g fill="none" stroke="#fff" stroke-width="1.6" stroke-linecap="round" stroke-linejoin="round"><path d="M24.700 614.600h-1.700a1.500 1.500 0 0 0-1.500 1.500v10a1.500 1.500 0 0 0 1.500 1.500h8a1.500 1.500 0 0 0 1.500-1.500v-10a1.500 1.500 0 0 0-1.500-1.500h-1.700"/><path d="M24.700 615.600v-1.300h1a1.300 1.300 0 0 1 2.600 0h1v1.300z" stroke-width="1.300"/></g><g fill="none" stroke="#fff" stroke-width="1.300" stroke-linejoin="round"><path d="M26.66,664.69 L26.66,665.92 L25.14,666.60 L24.70,667.37 L24.86,669.03 L23.79,669.64 L22.44,668.67 L21.55,668.67 L20.20,669.64 L19.14,669.03 L19.30,667.37 L18.86,666.60 L17.34,665.91 L17.34,664.68 L18.86,664.00 L19.30,663.23 L19.14,661.57 L20.21,660.96 L21.56,661.93 L22.45,661.93 L23.80,660.96 L24.86,661.57 L24.70,663.23 L25.14,664.00Z"/><path d="M35.96,670.39 L35.96,671.62 L34.44,672.30 L34.00,673.07 L34.16,674.73 L33.09,675.34 L31.74,674.37 L30.85,674.37 L29.50,675.34 L28.44,674.73 L28.60,673.07 L28.16,672.30 L26.64,671.61 L26.64,670.38 L28.16,669.70 L28.60,668.93 L28.44,667.27 L29.51,666.66 L30.86,667.63 L31.75,667.63 L33.10,666.66 L34.16,667.27 L34.00,668.93 L34.44,669.70Z"/></g><circle cx="22" cy="665.3" r="1" fill="#fff"/><circle cx="31.300" cy="671" r="1" fill="#fff"/><path d="M24.500 870.500l6 5.700-6 5.700" fill="none" stroke="#fff" stroke-width="1.900"/></svg><div class="t" style="left:76px;top:23px;color:#fff;font-size:14.5px;letter-spacing:-0.522px;font-weight:bold;">Project</div><div class="abs sel" style="left:133px;width:240px"></div><div class="t" style="left:143.500px;top:23.300px;color:#fff;font-size:14px;letter-spacing:-0.146px;">Example Project &gt; Ground Floor</div><svg class="abs" style="left:351.5px;top:28px" width="9" height="6" viewBox="0 0 9 6"><path d="M0.700 0.300h7.600a.5.5 0 0 1 .4.800l-3.700 4.300a.7.700 0 0 1-1 0l-3.700-4.300a.5.5 0 0 1 .4-.8z" fill="#fff"/></svg><svg class="abs" style="left:392px;top:20px" width="20" height="20" viewBox="0 0 20 20"><path d="M9.01,2.47 L10.99,2.47 L12.18,4.73 L13.47,5.48 L16.03,5.37 L17.02,7.09 L15.65,9.26 L15.65,10.74 L17.02,12.91 L16.03,14.63 L13.47,14.52 L12.18,15.27 L10.99,17.53 L9.01,17.53 L7.82,15.27 L6.53,14.52 L3.97,14.63 L2.98,12.91 L4.35,10.74 L4.35,9.26 L2.98,7.09 L3.97,5.37 L6.53,5.48 L7.82,4.73Z M7.3,10 a2.7,2.7 0 1,0 5.4,0 a2.7,2.7 0 1,0 -5.4,0Z" fill="#fff" fill-rule="evenodd" stroke="#fff" stroke-width="1.600" stroke-linejoin="round"/></svg><div class="t" style="left:432px;top:23px;color:#fff;font-size:14.5px;letter-spacing:-0.938px;font-weight:bold;">Form</div><div class="abs sel" style="left:479px;width:280px;border:1px solid #2d74c4"></div><div class="t" style="left:490.500px;top:23.300px;color:#fff;font-size:14px;letter-spacing:0.006px;">All forms</div><svg class="abs" style="left:739px;top:28px" width="9" height="6" viewBox="0 0 9 6"><path d="M0.700 0.300h7.600a.5.5 0 0 1 .4.800l-3.700 4.300a.7.700 0 0 1-1 0l-3.700-4.300a.5.5 0 0 1 .4-.8z" fill="#fff"/></svg><div class="abs" style="left:1613px;top:15px;width:32px;height:30px;border-radius:4px;border:1px solid #4a9bf7;background:linear-gradient(135deg,#86e36f 0%,#2aa6f3 22%,#1873e3 55%,#1a78e8 75%,#2f95ff 100%)"></div><svg class="abs" style="left:1620px;top:21px" width="18" height="18" viewBox="0 0 18 18"><g transform="translate(9 9.200) scale(1 .93)"><g fill="none" stroke="#fff" stroke-width="1.6"><ellipse rx="11" ry="4.300" transform="rotate(45)"/><ellipse rx="11" ry="4.300" transform="rotate(-45)"/></g><circle cx="0" cy="-5.300" r="2.700" fill="#1c7ee8"/><path d="M-.9 -8.300l.6 1.500 1.500.6-1.500.6-.6 1.500-.6-1.500-1.500-.6 1.500-.6z" fill="#fff"/><path d="M2.300 -4.600l.4 1 1 .4-1 .4-.4 1-.4-1-1-.4 1-.4z" fill="#fff"/></g></svg><svg class="abs" style="left:1668px;top:22px" width="15" height="17" viewBox="0 0 15 17"><path d="M7.500 0.600a.9.900 0 0 1 .9.900v.5c2.300.4 3.800 2.300 3.800 4.700 0 2.600.5 3.900 1.500 4.900.5.500.2 1.400-.6 1.400h-11.200c-.8 0-1.100-.9-.6-1.400 1-1 1.500-2.300 1.500-4.900 0-2.400 1.500-4.300 3.800-4.700v-.5a.9.900 0 0 1 .9-.9z" fill="#fff"/><path d="M5.700 14.200h3.600a1.800 1.800 0 0 1-3.600 0z" fill="#fff"/></svg><div class="abs" style="left:1680px;top:17px;width:9px;height:9px;border-radius:5px;background:#fdd60a"></div><div class="abs" style="left:74px;top:76px;width:132px;height:30px;border-radius:4px;background:#5eb311"></div><svg class="abs" style="left:89px;top:84px" width="14" height="14" viewBox="0 0 14 14"><path d="M7 0.500v13M0.500 7h13" stroke="#fff" stroke-width="2" fill="none"/></svg><div class="t" style="left:110px;top:83.500px;color:#fff;font-size:14px;letter-spacing:-0.113px;">Create Ticket</div><div class="abs sep" style="left:221px"></div><div class="t" style="left:237.500px;top:84px;color:#111;font-size:14.5px;letter-spacing:-0.07px;font-weight:bold;">View</div><div class="abs btn" style="left:280px;width:104px"></div><svg class="abs" style="left:296px;top:83px" width="18" height="16" viewBox="0 0 18 16"><g fill="#111"><path d="M0.600 5.300l5.700-2.100v10.900l-5.400 1.900a.5.500 0 0 1-.7-.5v-9.500a.8.800 0 0 1 .4-.7z"/><path d="M7.300 8.600h4.900v7.300l-4.900-1.700z"/><path d="M13.400 4.600l3.900-1.500a.5.500 0 0 1 .7.500v9.500a.8.800 0 0 1-.5.700l-4.100 1.700z"/><path d="M9.400 0.200a3.600 3.600 0 0 0-3.600 3.600c0 1.800 2.200 5 3.200 6.300.2.300.6.300.8 0 1-1.300 3.200-4.500 3.200-6.300a3.600 3.600 0 0 0-3.600-3.600z" stroke="#fff" stroke-width=".8"/><circle cx="9.400" cy="3.800" r="1.150" fill="#fff"/></g></svg><div class="t" style="left:321px;top:83.500px;color:#111;font-size:14px;letter-spacing:-0.63px;">Plan</div><svg class="abs" style="left:358.5px;top:89px" width="9" height="6" viewBox="0 0 9 6"><path d="M0.700 0.300h7.600a.5.5 0 0 1 .4.800l-3.700 4.300a.7.700 0 0 1-1 0l-3.700-4.300a.5.5 0 0 1 .4-.8z" fill="#111"/></svg><div class="abs sep" style="left:399px"></div><div class="abs btn" style="left:415px;width:230px"></div><svg class="abs" style="left:425px;top:84px" width="15" height="15" viewBox="0 0 15 15"><circle cx="6" cy="6" r="4.700" fill="none" stroke="#7a7a7a" stroke-width="1.500"/><path d="M9.500 9.500l4.300 4.300" stroke="#7a7a7a" stroke-width="1.700" stroke-linecap="round"/></svg><div class="t" style="left:445.500px;top:84px;color:#737373;font-size:14px;letter-spacing:-0.209px;">Search tickets</div><div class="abs btn" style="left:655px;width:30px"></div><svg class="abs" style="left:662px;top:83.500px" width="16" height="15" viewBox="0 0 16 15"><path d="M1 0.300h14a.7.700 0 0 1 .5 1.200l-5.500 6.300v5.800a.7.700 0 0 1-1.100.6l-2.500-1.800a.7.700 0 0 1-.3-.6v-4l-5.600-6.300a.7.700 0 0 1 .5-1.200z" fill="#111"/></svg><div class="abs btn" style="left:692px;width:128px"></div><div class="t" style="left:708px;top:83.500px;color:#111;font-size:14px;letter-spacing:-0.156px;">Saved filters</div><svg class="abs" style="left:794px;top:89px" width="9" height="6" viewBox="0 0 9 6"><path d="M0.700 0.300h7.600a.5.5 0 0 1 .4.800l-3.700 4.300a.7.700 0 0 1-1 0l-3.700-4.300a.5.5 0 0 1 .4-.8z" fill="#111"/></svg><div class="t" style="left:832px;top:83.500px;color:#222;font-size:14px;letter-spacing:0.017px;">6 tickets</div><div class="abs" style="left:1327px;top:84px;width:14px;height:14px;border:1.500px solid #6e6e6e;border-radius:3px;background:#fff"></div><div class="t" style="left:1349px;top:83.500px;color:#333;font-size:14px;letter-spacing:-0.064px;">Hide closed tickets</div><div class="abs sep" style="left:1479px"></div><div class="abs btn" style="left:1495px;width:138px"></div><svg class="abs" style="left:1510.500px;top:82.700px" width="17" height="17" viewBox="0 0 17 17"><path d="M1.700 0.300h6.300l4 4v5.400h-7.400v6.700h-2.900a1.300 1.300 0 0 1-1.300-1.300v-13.500a1.300 1.300 0 0 1 1.300-1.300z" fill="#111"/><path d="M8 0.600v3.200a.6.600 0 0 0 .6.600h3.200" fill="none" stroke="#fff" stroke-width=".9"/><text x="4.900" y="16.500" font-family="Liberation Sans, sans-serif" font-weight="bold" font-size="7.600" fill="#111" textLength="11.400" lengthAdjust="spacingAndGlyphs">PDF</text></svg><div class="t" style="left:1535px;top:83.500px;color:#111;font-size:14px;letter-spacing:-0.037px;">Create report</div><div class="abs sep" style="left:1648px"></div><svg class="abs" style="left:1677px;top:84px" width="4" height="14" viewBox="0 0 4 14"><circle cx="2" cy="1.700" r="1.600"/><circle cx="2" cy="7" r="1.600"/><circle cx="2" cy="12.300" r="1.600"/></svg><div id="fbar" class="abs"></div><div class="abs fchip" style="left:85.5px;width:92.5px"></div><div class="t" style="left:100.5px;top:140px;color:#333;font-size:14px;letter-spacing:-0.365px;">Status</div><svg class="abs" style="left:156px;top:141.500px" width="11" height="11" viewBox="0 0 11 11"><path d="M1 1l9 9M10 1l-9 9" stroke="#222" stroke-width="1.700" fill="none"/></svg><div class="abs fchip" style="left:188px;width:110.5px"></div><div class="t" style="left:204.5px;top:140px;color:#333;font-size:14px;letter-spacing:-0.449px;">Assignee</div><svg class="abs" style="left:277px;top:141.500px" width="11" height="11" viewBox="0 0 11 11"><path d="M1 1l9 9M10 1l-9 9" stroke="#222" stroke-width="1.700" fill="none"/></svg><div class="abs fchip" style="left:309px;width:102px"></div><div class="t" style="left:324.5px;top:140px;color:#333;font-size:14px;letter-spacing:-0.026px;">Creator</div><svg class="abs" style="left:389.5px;top:141.500px" width="11" height="11" viewBox="0 0 11 11"><path d="M1 1l9 9M10 1l-9 9" stroke="#222" stroke-width="1.700" fill="none"/></svg><div class="abs fchip" style="left:421px;width:99.5px"></div><div class="t" style="left:437px;top:140px;color:#333;font-size:14px;letter-spacing:0.118px;">Priority</div><svg class="abs" style="left:499.5px;top:141.500px" width="11" height="11" viewBox="0 0 11 11"><path d="M1 1l9 9M10 1l-9 9" stroke="#222" stroke-width="1.700" fill="none"/></svg><div class="abs" style="left:531px;top:132px;width:77px;height:30px;border-radius:4px;background:#d5dae0"></div><svg class="abs" style="left:546px;top:140.500px" width="13" height="13" viewBox="0 0 13 13"><path d="M6.500 0.500v12M0.500 6.500h12" stroke="#111" stroke-width="1.800" fill="none"/></svg><div class="t" style="left:568px;top:140px;color:#222;font-size:14px;letter-spacing:-0.136px;">Add</div><div class="t" style="left:1513.500px;top:140px;color:#a9adb1;font-size:14px;letter-spacing:-0.291px;">Clear</div><div class="t" style="left:1592px;top:140px;color:#a9adb1;font-size:14px;letter-spacing:-0.852px;">Save</div><svg class="abs" style="left:1661px;top:139px" width="16" height="16" viewBox="0 0 16 16"><g stroke="#a3a9b3" stroke-width="1.400" fill="#e2e6ea"><path d="M0 3h16M0 8h16M0 13h16"/><circle cx="6" cy="3" r="1.800"/><circle cx="11" cy="8" r="1.800"/><circle cx="5" cy="13" r="1.800"/></g></svg><div class="abs" style="left:531px;top:167px;width:737px;height:733px;background:#fff;border:1px solid #c3cfdb;border-radius:3px;box-shadow:0 4px 8px rgba(40,60,90,.2)"></div><div class="abs" style="left:1252px;top:168px;width:15px;height:731px;background:#fafafa;border-left:1px solid #e8e8e8"></div><div class="abs" style="left:1256px;top:171px;width:8px;height:530px;border-radius:4px;background:#c4c4c4"></div><div class="abs" style="left:546px;top:189px;width:548px;height:30px;border:1px solid #b4c4d6;border-radius:4px;background:#fff;box-shadow:0 0 5px 2.500px rgba(110,170,235,.38)"></div><svg class="abs" style="left:556px;top:197px" width="15" height="15" viewBox="0 0 15 15"><circle cx="6" cy="6" r="4.700" fill="none" stroke="#6f6f6f" stroke-width="1.500"/><path d="M9.500 9.500l4.300 4.300" stroke="#6f6f6f" stroke-width="1.700" stroke-linecap="round"/></svg><div class="t" style="left:577px;top:197px;color:#757575;font-size:14px;letter-spacing:-0.393px;">Search</div><div class="abs" style="left:1105px;top:189px;width:133px;height:30px;border-radius:4px;background:linear-gradient(100deg,#b4ef45 0%,#3cc3ee 14%,#1f7be6 50%,#2a8ff0 80%,#3fa6fb 100%)"></div><div class="abs" style="left:1106px;top:190px;width:131px;height:28px;border-radius:3px;background:#eef4fc"></div><svg class="abs" style="left:1119.5px;top:194.8px" width="18" height="18" viewBox="0 0 18 18"><defs><linearGradient id="aig2" x1="0" y1="0" x2="1" y2="1"><stop offset="0" stop-color="#8be04e"/><stop offset=".3" stop-color="#27b3ee"/><stop offset=".65" stop-color="#1a73e8"/><stop offset="1" stop-color="#2a8df5"/></linearGradient></defs><g transform="translate(9 9.200) scale(1 .93)"><g fill="none" stroke="url(#aig2)" stroke-width="1.7"><ellipse rx="11" ry="4.300" transform="rotate(45)"/><ellipse rx="11" ry="4.300" transform="rotate(-45)"/></g><circle cx="0" cy="-5.300" r="2.700" fill="#eef4fc"/><path d="M-.9 -8.300l.6 1.500 1.500.6-1.500.6-.6 1.500-.6-1.500-1.500-.6 1.500-.6z" fill="#2bb0ee"/><path d="M2.300 -4.600l.4 1 1 .4-1 .4-.4 1-.4-1-1-.4 1-.4z" fill="#2bb0ee"/></g></svg><div class="t" style="left:1145px;top:196.500px;color:#222;font-size:14px;letter-spacing:0.126px;">Filter with AI</div><div class="hd" style="left:546.500px;top:244px;font-size:14px;letter-spacing:-0.591px;font-weight:bold;">General</div><div class="hd" style="left:546.500px;top:373px;font-size:14px;letter-spacing:-0.659px;font-weight:bold;">Form settings</div><div class="hd" style="left:546.500px;top:583px;font-size:14px;letter-spacing:-0.314px;font-weight:bold;">Default fields</div><div class="hd" style="left:546.500px;top:833px;font-size:14px;letter-spacing:-0.259px;font-weight:bold;">Order of Work</div><div class="chip" style="left:546px;top:270px;width:98px"><svg class="ic" viewBox="0 0 16 16"><circle cx="2" cy="3" r="1.700"/><circle cx="2" cy="8" r="1.700"/><circle cx="2" cy="13" r="1.700"/><rect x="5.700" y="2" width="10.300" height="2" rx=".7"/><rect x="5.700" y="7" width="10.300" height="2" rx=".7"/><rect x="5.700" y="12" width="10.300" height="2" rx=".7"/></svg><span class="tx" style="font-size:14px;letter-spacing:-0.153px;">Project</span></div><div class="chip" style="left:654px;top:270px;width:88px"><svg class="ic" viewBox="0 0 16 16"><circle cx="2" cy="3" r="1.700"/><circle cx="2" cy="8" r="1.700"/><circle cx="2" cy="13" r="1.700"/><rect x="5.700" y="2" width="10.300" height="2" rx=".7"/><rect x="5.700" y="7" width="10.300" height="2" rx=".7"/><rect x="5.700" y="12" width="10.300" height="2" rx=".7"/></svg><span class="tx" style="font-size:14px;letter-spacing:-0.504px;">Layer</span></div><div class="chip" style="left:753px;top:270px;width:85px"><svg class="ic" viewBox="0 0 16 16"><circle cx="2" cy="3" r="1.700"/><circle cx="2" cy="8" r="1.700"/><circle cx="2" cy="13" r="1.700"/><rect x="5.700" y="2" width="10.300" height="2" rx=".7"/><rect x="5.700" y="7" width="10.300" height="2" rx=".7"/><rect x="5.700" y="12" width="10.300" height="2" rx=".7"/></svg><span class="tx" style="font-size:14px;letter-spacing:-0.791px;">Form</span></div><div class="chip" style="left:849px;top:270px;width:136px"><svg class="ic" viewBox="0 0 16 16"><path d="M8 0.200c.5 0 .9.300.9.800v.2a4 4 0 0 1 2.800 3.600h.3a.5.500 0 0 1 0 1h-8a.5.500 0 0 1 0-1h.3a4 4 0 0 1 2.800-3.600v-.2c0-.5.400-.8.900-.8z"/><path d="M4.700 6.500h6.600a3.300 3.300 0 0 1-6.600 0z"/><path d="M1 16c0-3.400 2.300-5.300 4.500-5.300l2.500 1.700 2.500-1.700c2.200 0 4.500 1.900 4.500 5.300z"/></svg><span class="tx" style="font-size:14px;letter-spacing:-0.213px;">Involved user</span></div><div class="chip" style="left:995px;top:270px;width:157px"><svg class="ic" viewBox="0 0 16 16"><path d="M13.600 6.900l-6 6a3.300 3.300 0 0 1-4.700-4.700l6.300-6.300a2.200 2.200 0 0 1 3.100 3.100l-6 6a1.100 1.100 0 0 1-1.500-1.500l5.300-5.300" fill="none" stroke="currentColor" stroke-width="1.500" stroke-linecap="round"/></svg><span class="tx" style="font-size:14px;letter-spacing:-0.236px;">Has attachments</span></div><div class="chip" style="left:546px;top:311px;width:124px"><svg class="ic" viewBox="0 0 16 16"><path d="M2 1.200h12a2 2 0 0 1 2 2v9.600a2 2 0 0 1-2 2h-12a2 2 0 0 1-2-2v-9.600a2 2 0 0 1 2-2zm1.800 2.100a1.500 1.500 0 1 0 0 3 1.500 1.500 0 0 0 0-3zm-2 9.700h12.400l-4.200-6.200-2.800 4-1.700-2.200z" fill-rule="evenodd"/></svg><span class="tx" style="font-size:14px;letter-spacing:-0.542px;">Has images</span></div><div class="chip" style="left:680px;top:311px;width:149px"><svg class="ic" viewBox="0 0 16 16"><path d="M3.500 0h5.700v3.600c0 .6.400 1 1 1h3.800v9.700a1.700 1.700 0 0 1-1.700 1.700h-8.800a1.700 1.700 0 0 1-1.700-1.700v-12.600a1.700 1.700 0 0 1 1.700-1.700zm6.900 0l3.600 3.600h-3.600zm-5.400 8.200v1h6v-1zm0 2.300v1h6v-1zm0 2.300v1h6v-1z" fill-rule="evenodd"/></svg><span class="tx" style="font-size:14px;letter-spacing:-0.29px;">Has documents</span></div><div class="chip" style="left:840px;top:311px;width:121px"><svg class="ic" viewBox="0 0 16 16"><rect x="-1" y="2" width="12" height="12" rx="2.200"/><path d="M12 6.300l4.200-2.800a.5.500 0 0 1 .8.400v8.200a.5.500 0 0 1-.8.400l-4.200-2.800z"/></svg><span class="tx" style="font-size:14px;letter-spacing:-0.375px;">Has videos</span></div><div class="chip" style="left:971px;top:311px;width:183px"><svg class="ic" viewBox="0 0 16 16"><rect x="5.200" y="0" width="5.600" height="10.500" rx="2.800"/><path d="M3 7v1a5 5 0 0 0 10 0v-1M8 13v2.400M5.300 15.400h5.400" fill="none" stroke="currentColor" stroke-width="1.300" stroke-linecap="round"/></svg><span class="tx" style="font-size:14px;letter-spacing:-0.24px;">Has audio recordings</span></div><div class="chip" style="left:546px;top:399px;width:145px"><svg class="ic" viewBox="0 0 16 16"><rect x="1" y="1" width="14" height="14" rx="2.200"/><path d="M4.300 8.200l2.500 2.500 4.900-5.200" fill="none" stroke="#fff" stroke-width="1.700" stroke-linecap="round" stroke-linejoin="round"/></svg><span class="tx" style="font-size:14px;letter-spacing:-0.321px;">Has comments</span></div><div class="chip" style="left:702px;top:399px;width:161px"><svg class="ic" viewBox="0 0 16 16"><rect x="1" y="1" width="14" height="14" rx="2.200"/><path d="M4.300 8.200l2.500 2.500 4.900-5.200" fill="none" stroke="#fff" stroke-width="1.700" stroke-linecap="round" stroke-linejoin="round"/></svg><span class="tx" style="font-size:14px;letter-spacing:-0.294px;">Has Plan Position</span></div><div class="chip" style="left:873px;top:399px;width:153px"><svg class="ic" viewBox="0 0 16 16"><rect x="1" y="1" width="14" height="14" rx="2.200"/><path d="M4.300 8.200l2.500 2.500 4.900-5.200" fill="none" stroke="#fff" stroke-width="1.700" stroke-linecap="round" stroke-linejoin="round"/></svg><span class="tx" style="font-size:14px;letter-spacing:-0.193px;">Has geolocation</span></div><div class="chip" style="left:1036px;top:399px;width:121px"><svg class="ic" viewBox="0 0 16 16"><rect x="1" y="1" width="14" height="14" rx="2.200"/><path d="M4.300 8.200l2.500 2.500 4.900-5.200" fill="none" stroke="#fff" stroke-width="1.700" stroke-linecap="round" stroke-linejoin="round"/></svg><span class="tx" style="font-size:14px;letter-spacing:-0.298px;">Has repeat</span></div><div class="chip" style="left:546px;top:440px;width:149px"><svg class="ic" viewBox="0 0 16 16"><rect x="1" y="1" width="14" height="14" rx="2.200"/><path d="M4.300 8.200l2.500 2.500 4.900-5.200" fill="none" stroke="#fff" stroke-width="1.700" stroke-linecap="round" stroke-linejoin="round"/></svg><span class="tx" style="font-size:14px;letter-spacing:-0.146px;">Has sub-tickets</span></div><div class="chip" style="left:705px;top:440px;width:165px"><svg class="ic" viewBox="0 0 16 16"><rect x="1" y="1" width="14" height="14" rx="2.200"/><path d="M4.300 8.200l2.500 2.500 4.900-5.200" fill="none" stroke="#fff" stroke-width="1.700" stroke-linecap="round" stroke-linejoin="round"/></svg><span class="tx" style="font-size:14px;letter-spacing:-0.141px;">Has parent tickets</span></div><div class="chip" style="left:881px;top:440px;width:129px"><svg class="ic" viewBox="0 0 16 16"><rect x="1" y="1" width="14" height="14" rx="2.200"/><path d="M4.300 8.200l2.500 2.500 4.900-5.200" fill="none" stroke="#fff" stroke-width="1.700" stroke-linecap="round" stroke-linejoin="round"/></svg><span class="tx" style="font-size:14px;letter-spacing:-0.425px;">Is scheduled</span></div><div class="chip" style="left:1021px;top:440px;width:210px"><svg class="ic" viewBox="0 0 16 16"><rect x="1" y="1" width="14" height="14" rx="2.200"/><path d="M4.300 8.200l2.500 2.500 4.900-5.200" fill="none" stroke="#fff" stroke-width="1.700" stroke-linecap="round" stroke-linejoin="round"/></svg><span class="tx" style="font-size:14px;letter-spacing:-0.177px;">Is attached to 360° image</span></div><div class="chip" style="left:546px;top:480px;width:108px"><svg class="ic" viewBox="0 0 16 16"><rect x="1" y="1" width="14" height="14" rx="2.200"/><path d="M4.300 8.200l2.500 2.500 4.900-5.200" fill="none" stroke="#fff" stroke-width="1.700" stroke-linecap="round" stroke-linejoin="round"/></svg><span class="tx" style="font-size:14px;letter-spacing:-0.305px;">Is locked</span></div><div class="chip" style="left:664px;top:480px;width:144px"><svg class="ic" viewBox="0 0 16 16"><rect x="1" y="1" width="14" height="14" rx="2.200"/><path d="M4.300 8.200l2.500 2.500 4.900-5.200" fill="none" stroke="#fff" stroke-width="1.700" stroke-linecap="round" stroke-linejoin="round"/></svg><span class="tx" style="font-size:14px;letter-spacing:-0.348px;">Has signatures</span></div><div class="chip" style="left:818px;top:480px;width:243px"><svg class="ic" viewBox="0 0 16 16"><path d="M5.900 1.600l-2 12.800M12 1.600l-2 12.800M2 5.500h12.300M1.200 10.500h12.300" fill="none" stroke="currentColor" stroke-width="1.900"/></svg><span class="tx" style="font-size:14px;letter-spacing:-0.232px;">Numbering sequence (number)</span></div><div class="chip" style="left:546px;top:521px;width:231px"><svg class="ic" viewBox="0 0 16 16"><path d="M7 2.600h-4.300a2 2 0 0 0-2 2v8.700a2 2 0 0 0 2 2h8.700a2 2 0 0 0 2-2v-4.300" fill="none" stroke="currentColor" stroke-width="1.600" stroke-linecap="round"/><path d="M12.500.6a1.300 1.300 0 0 1 1.800 0l1.100 1.100a1.300 1.300 0 0 1 0 1.800l-.9.900-2.900-2.900zm-1.700 1.700l2.900 2.900-5.600 5.600-3.200.7a.4.400 0 0 1-.4-.4l.7-3.200z"/></svg><span class="tx" style="font-size:14px;letter-spacing:-0.186px;">Numbering sequence (prefix)</span></div><div class="chip" style="left:546px;top:609px;width:110px"><svg class="ic" viewBox="0 0 16 16"><path d="M5.900 1.600l-2 12.800M12 1.600l-2 12.800M2 5.500h12.300M1.200 10.500h12.300" fill="none" stroke="currentColor" stroke-width="1.900"/></svg><span class="tx" style="font-size:14px;letter-spacing:-0.023px;">Ticket ID</span></div><div class="chip" style="left:666px;top:609px;width:82px"><svg class="ic" viewBox="0 0 16 16"><path d="M7 2.600h-4.300a2 2 0 0 0-2 2v8.700a2 2 0 0 0 2 2h8.700a2 2 0 0 0 2-2v-4.300" fill="none" stroke="currentColor" stroke-width="1.600" stroke-linecap="round"/><path d="M12.500.6a1.300 1.300 0 0 1 1.800 0l1.100 1.100a1.300 1.300 0 0 1 0 1.800l-.9.900-2.900-2.900zm-1.700 1.700l2.900 2.900-5.600 5.600-3.200.7a.4.400 0 0 1-.4-.4l.7-3.200z"/></svg><span class="tx" style="font-size:14px;letter-spacing:0.114px;">Title</span></div><div class="chip dis" style="left:758px;top:609px;width:93px"><svg class="ic" viewBox="0 0 16 16"><path d="M1.600 8.700l3.900 3.800 8.900-9" fill="none" stroke="currentColor" stroke-width="1.700" stroke-linecap="round" stroke-linejoin="round"/></svg><span class="tx" style="font-size:14px;letter-spacing:-0.365px;">Status</span></div><div class="chip dis" style="left:861px;top:609px;width:100.5px"><svg class="ic" viewBox="0 0 16 16"><path d="M0.500 0.200h4l3 4.600a6 6 0 0 0-3.700 1.500l-3.700-5.400a.4.400 0 0 1 .4-.7zm11 0h4a.4.400 0 0 1 .4.700l-3.700 5.400a6 6 0 0 0-3.700-1.500z"/><path d="M8 5.400a5.300 5.300 0 1 0 0 10.600 5.300 5.300 0 0 0 0-10.600zm0 2.300l.9 1.900 2 .3-1.500 1.400.4 2-1.800-1-1.800 1 .4-2-1.500-1.400 2-.3z" fill-rule="evenodd"/></svg><span class="tx" style="font-size:14px;letter-spacing:0.18px;">Priority</span></div><div class="chip" style="left:971px;top:609px;width:121px"><svg class="ic" viewBox="0 0 16 16"><rect x="0" y="2" width="16" height="5.300" rx="1.500"/><rect x="0" y="8.700" width="16" height="5.300" rx="1.500"/><rect x="10" y="4" width="4.500" height="1.300" rx=".6" fill="#fff"/><rect x="4" y="10.700" width="10.500" height="1.300" rx=".6" fill="#fff"/></svg><span class="tx" style="font-size:14px;letter-spacing:-0.686px;">Progress %</span></div><div class="chip dis" style="left:1102px;top:609px;width:109.5px"><svg class="ic" viewBox="0 0 16 16"><path d="M8 0.200c.5 0 .9.300.9.800v.2a4 4 0 0 1 2.800 3.600h.3a.5.500 0 0 1 0 1h-8a.5.500 0 0 1 0-1h.3a4 4 0 0 1 2.800-3.600v-.2c0-.5.400-.8.900-.8z"/><path d="M4.700 6.500h6.600a3.300 3.300 0 0 1-6.600 0z"/><path d="M1 16c0-3.400 2.300-5.300 4.500-5.300l2.500 1.700 2.500-1.700c2.200 0 4.500 1.900 4.500 5.300z"/></svg><span class="tx" style="font-size:14px;letter-spacing:-0.449px;">Assignee</span></div><div class="chip" style="left:546px;top:650px;width:180px"><svg class="ic" viewBox="0 0 16 16"><path d="M8 0.200c.5 0 .9.300.9.800v.2a4 4 0 0 1 2.800 3.600h.3a.5.500 0 0 1 0 1h-8a.5.500 0 0 1 0-1h.3a4 4 0 0 1 2.800-3.600v-.2c0-.5.400-.8.900-.8z"/><path d="M4.700 6.500h6.600a3.300 3.300 0 0 1-6.600 0z"/><path d="M1 16c0-3.400 2.300-5.300 4.500-5.300l2.500 1.700 2.500-1.700c2.200 0 4.500 1.900 4.500 5.300z"/></svg><span class="tx" style="font-size:14px;letter-spacing:-0.365px;">Assignee's Company</span></div><div class="chip" style="left:736px;top:650px;width:173px"><svg class="ic" viewBox="0 0 16 16"><rect x="1" y="1" width="14" height="14" rx="2.200"/><path d="M4.300 8.200l2.500 2.500 4.900-5.200" fill="none" stroke="#fff" stroke-width="1.700" stroke-linecap="round" stroke-linejoin="round"/></svg><span class="tx" style="font-size:14px;letter-spacing:-0.39px;">Unread by assignee</span></div><div class="chip" style="left:920px;top:650px;width:135px"><svg class="ic" viewBox="0 0 16 16"><circle cx="5" cy="4" r="3.300"/><path d="M-1.500 14.500c0-3.800 2.500-5.800 4.400-5.800l2.100 1 2.100-1c1.900 0 4.400 2 4.400 5.800a1 1 0 0 1-1 1h-11a1 1 0 0 1-1-1z"/><circle cx="12.500" cy="4.500" r="2.800"/><path d="M12.600 15.500h4.400a1 1 0 0 0 1-1c0-3.500-2-5.500-4-5.500l-1.500.8-1.200-.6c1 1.200 1.800 3 1.800 5.300 0 .4-.2.800-.5 1z"/></svg><span class="tx" style="font-size:14px;letter-spacing:-0.706px;">Receiver (CC)</span></div><div class="chip" style="left:1066px;top:650px;width:110px"><svg class="ic" viewBox="0 0 16 16"><path d="M3.800 0a.8.800 0 0 1 .8.800v1.200h6.800v-1.200a.8.800 0 0 1 1.600 0v1.200h.5a1.500 1.500 0 0 1 1.500 1.500v1.800h-14v-1.800a1.500 1.500 0 0 1 1.500-1.500h.5v-1.200a.8.800 0 0 1 .8-.8z"/><path d="M1 6.500h14v8a1.500 1.500 0 0 1-1.500 1.500h-11a1.500 1.500 0 0 1-1.500-1.500zm2.200 1.800v2.200h2.200v-2.200zm3.700 0v2.200h2.200v-2.200zm3.700 0v2.200h2.200v-2.200zm-7.400 3.600v2.200h2.200v-2.200zm3.700 0v2.200h2.200v-2.200zm3.700 0v2.200h2.200v-2.200z" fill-rule="evenodd"/></svg><span class="tx" style="font-size:14px;letter-spacing:-0.29px;">Due date</span></div><div class="chip" style="left:546px;top:690px;width:95px"><svg class="ic" viewBox="0 0 16 16"><path d="M5.900 1.600l-2 12.800M12 1.600l-2 12.800M2 5.500h12.300M1.200 10.500h12.300" fill="none" stroke="currentColor" stroke-width="1.900"/></svg><span class="tx" style="font-size:14px;letter-spacing:-0.161px;">Due in</span></div><div class="chip" style="left:651px;top:690px;width:174px"><svg class="ic" viewBox="0 0 16 16"><path d="M5.900 1.600l-2 12.800M12 1.600l-2 12.800M2 5.500h12.300M1.200 10.500h12.300" fill="none" stroke="currentColor" stroke-width="1.900"/></svg><span class="tx" style="font-size:14px;letter-spacing:-0.152px;">Overdue by at least</span></div><div class="chip" style="left:835px;top:690px;width:115px"><svg class="ic" viewBox="0 0 16 16"><path d="M3.800 0a.8.800 0 0 1 .8.800v1.200h6.800v-1.200a.8.800 0 0 1 1.600 0v1.200h.5a1.500 1.500 0 0 1 1.500 1.500v1.800h-14v-1.800a1.500 1.500 0 0 1 1.500-1.500h.5v-1.200a.8.800 0 0 1 .8-.8z"/><path d="M1 6.500h14v8a1.500 1.500 0 0 1-1.500 1.500h-11a1.500 1.500 0 0 1-1.500-1.500zm2.200 1.800v2.200h2.200v-2.200zm3.700 0v2.200h2.200v-2.200zm3.700 0v2.200h2.200v-2.200zm-7.400 3.600v2.200h2.200v-2.200zm3.700 0v2.200h2.200v-2.200zm3.700 0v2.200h2.200v-2.200z" fill-rule="evenodd"/></svg><span class="tx" style="font-size:14px;letter-spacing:-0.22px;">Extension</span></div><div class="chip" style="left:960px;top:690px;width:153px"><svg class="ic" viewBox="0 0 16 16"><path d="M5.900 1.600l-2 12.800M12 1.600l-2 12.800M2 5.500h12.300M1.200 10.500h12.300" fill="none" stroke="currentColor" stroke-width="1.900"/></svg><span class="tx" style="font-size:14px;letter-spacing:-0.141px;">Extension count</span></div><div class="chip dis" style="left:1123px;top:690px;width:101px"><svg class="ic" viewBox="0 0 16 16"><path d="M8 0.200c.5 0 .9.300.9.800v.2a4 4 0 0 1 2.800 3.600h.3a.5.500 0 0 1 0 1h-8a.5.500 0 0 1 0-1h.3a4 4 0 0 1 2.800-3.600v-.2c0-.5.400-.8.900-.8z"/><path d="M4.700 6.500h6.600a3.300 3.300 0 0 1-6.600 0z"/><path d="M1 16c0-3.400 2.300-5.300 4.500-5.300l2.500 1.700 2.500-1.700c2.200 0 4.500 1.900 4.500 5.300z"/></svg><span class="tx" style="font-size:14px;letter-spacing:-0.169px;">Creator</span></div><div class="chip" style="left:546px;top:731px;width:169px"><svg class="ic" viewBox="0 0 16 16"><path d="M7 2.600h-4.300a2 2 0 0 0-2 2v8.700a2 2 0 0 0 2 2h8.700a2 2 0 0 0 2-2v-4.300" fill="none" stroke="currentColor" stroke-width="1.600" stroke-linecap="round"/><path d="M12.500.6a1.300 1.300 0 0 1 1.800 0l1.100 1.100a1.300 1.300 0 0 1 0 1.800l-.9.900-2.900-2.900zm-1.700 1.700l2.900 2.900-5.600 5.600-3.200.7a.4.400 0 0 1-.4-.4l.7-3.200z"/></svg><span class="tx" style="font-size:14px;letter-spacing:-0.209px;">Creator's company</span></div><div class="chip" style="left:725px;top:731px;width:122px"><svg class="ic" viewBox="0 0 16 16"><path d="M3.800 0a.8.800 0 0 1 .8.800v1.200h6.800v-1.200a.8.800 0 0 1 1.600 0v1.200h.5a1.500 1.500 0 0 1 1.500 1.500v1.800h-14v-1.800a1.500 1.500 0 0 1 1.500-1.500h.5v-1.200a.8.800 0 0 1 .8-.8z"/><path d="M1 6.500h14v8a1.500 1.500 0 0 1-1.500 1.500h-11a1.500 1.500 0 0 1-1.500-1.500zm2.200 1.800v2.200h2.200v-2.200zm3.700 0v2.200h2.200v-2.200zm3.700 0v2.200h2.200v-2.200zm-7.400 3.600v2.200h2.200v-2.200zm3.700 0v2.200h2.200v-2.200zm3.700 0v2.200h2.200v-2.200z" fill-rule="evenodd"/></svg><span class="tx" style="font-size:14px;letter-spacing:-0.277px;">Created on</span></div><div class="chip" style="left:858px;top:731px;width:125px"><svg class="ic" viewBox="0 0 16 16"><path d="M8 0.200c.5 0 .9.300.9.800v.2a4 4 0 0 1 2.800 3.600h.3a.5.500 0 0 1 0 1h-8a.5.500 0 0 1 0-1h.3a4 4 0 0 1 2.800-3.600v-.2c0-.5.400-.8.900-.8z"/><path d="M4.700 6.500h6.600a3.300 3.300 0 0 1-6.600 0z"/><path d="M1 16c0-3.400 2.300-5.300 4.500-5.300l2.500 1.700 2.500-1.700c2.200 0 4.500 1.900 4.500 5.300z"/></svg><span class="tx" style="font-size:14px;letter-spacing:-0.21px;">Updated by</span></div><div class="chip" style="left:994px;top:731px;width:122px"><svg class="ic" viewBox="0 0 16 16"><path d="M3.800 0a.8.800 0 0 1 .8.800v1.200h6.800v-1.200a.8.800 0 0 1 1.600 0v1.200h.5a1.500 1.500 0 0 1 1.500 1.500v1.800h-14v-1.800a1.500 1.500 0 0 1 1.500-1.500h.5v-1.200a.8.800 0 0 1 .8-.8z"/><path d="M1 6.500h14v8a1.500 1.500 0 0 1-1.500 1.500h-11a1.500 1.500 0 0 1-1.500-1.500zm2.200 1.800v2.200h2.200v-2.200zm3.700 0v2.200h2.200v-2.200zm3.700 0v2.200h2.200v-2.200zm-7.400 3.600v2.200h2.200v-2.200zm3.700 0v2.200h2.200v-2.200zm3.700 0v2.200h2.200v-2.200z" fill-rule="evenodd"/></svg><span class="tx" style="font-size:14px;letter-spacing:-0.199px;">Updated at</span></div><div class="chip" style="left:546px;top:771px;width:116px"><svg class="ic" viewBox="0 0 16 16"><path d="M3.800 0a.8.800 0 0 1 .8.800v1.200h6.800v-1.200a.8.800 0 0 1 1.600 0v1.200h.5a1.500 1.500 0 0 1 1.500 1.500v1.800h-14v-1.800a1.500 1.500 0 0 1 1.500-1.500h.5v-1.200a.8.800 0 0 1 .8-.8z"/><path d="M1 6.500h14v8a1.500 1.500 0 0 1-1.500 1.500h-11a1.500 1.500 0 0 1-1.500-1.500zm2.200 1.800v2.200h2.200v-2.200zm3.700 0v2.200h2.200v-2.200zm3.700 0v2.200h2.200v-2.200zm-7.400 3.600v2.200h2.200v-2.200zm3.700 0v2.200h2.200v-2.200zm3.700 0v2.200h2.200v-2.200z" fill-rule="evenodd"/></svg><span class="tx" style="font-size:14px;letter-spacing:-0.282px;">Closed on</span></div><div class="chip" style="left:672px;top:771px;width:132px"><svg class="ic" viewBox="0 0 16 16"><path d="M8 0.200c.5 0 .9.300.9.800v.2a4 4 0 0 1 2.800 3.600h.3a.5.500 0 0 1 0 1h-8a.5.500 0 0 1 0-1h.3a4 4 0 0 1 2.800-3.600v-.2c0-.5.400-.8.900-.8z"/><path d="M4.700 6.500h6.600a3.300 3.300 0 0 1-6.600 0z"/><path d="M1 16c0-3.400 2.300-5.300 4.500-5.300l2.500 1.700 2.500-1.700c2.200 0 4.500 1.900 4.500 5.300z"/></svg><span class="tx" style="font-size:14px;letter-spacing:-0.18px;">Ticket signer</span></div><div class="chip" style="left:815px;top:771px;width:149px"><svg class="ic" viewBox="0 0 16 16"><path d="M1.600 8.700l3.900 3.800 8.900-9" fill="none" stroke="currentColor" stroke-width="1.700" stroke-linecap="round" stroke-linejoin="round"/></svg><span class="tx" style="font-size:14px;letter-spacing:-0.2px;">Approval status</span></div><div class="chip" style="left:546px;top:860px;width:137px"><svg class="ic" viewBox="0 0 16 16"><circle cx="2" cy="3" r="1.700"/><circle cx="2" cy="8" r="1.700"/><circle cx="2" cy="13" r="1.700"/><rect x="5.700" y="2" width="10.300" height="2" rx=".7"/><rect x="5.700" y="7" width="10.300" height="2" rx=".7"/><rect x="5.700" y="12" width="10.300" height="2" rx=".7"/></svg><span class="tx" style="font-size:14px;letter-spacing:-0.06px;">Type of Work</span></div><div class="chip" style="left:694px;top:860px;width:88px"><svg class="ic" viewBox="0 0 16 16"><circle cx="2" cy="3" r="1.700"/><circle cx="2" cy="8" r="1.700"/><circle cx="2" cy="13" r="1.700"/><rect x="5.700" y="2" width="10.300" height="2" rx=".7"/><rect x="5.700" y="7" width="10.300" height="2" rx=".7"/><rect x="5.700" y="12" width="10.300" height="2" rx=".7"/></svg><span class="tx" style="font-size:14px;letter-spacing:-0.711px;">Trade</span></div><div class="chip" style="left:792px;top:860px;width:120px"><svg class="ic" viewBox="0 0 16 16"><path d="M7 2.600h-4.300a2 2 0 0 0-2 2v8.700a2 2 0 0 0 2 2h8.700a2 2 0 0 0 2-2v-4.300" fill="none" stroke="currentColor" stroke-width="1.600" stroke-linecap="round"/><path d="M12.500.6a1.300 1.300 0 0 1 1.800 0l1.100 1.100a1.300 1.300 0 0 1 0 1.800l-.9.900-2.900-2.900zm-1.700 1.700l2.900 2.900-5.600 5.600-3.200.7a.4.400 0 0 1-.4-.4l.7-3.200z"/></svg><span class="tx" style="font-size:14px;letter-spacing:-0.398px;">Comments</span></div><div class="chip" style="left:923px;top:860px;width:126px"><svg class="ic" viewBox="0 0 16 16"><path d="M13.600 6.900l-6 6a3.300 3.300 0 0 1-4.700-4.700l6.300-6.300a2.200 2.200 0 0 1 3.100 3.100l-6 6a1.100 1.100 0 0 1-1.500-1.500l5.300-5.300" fill="none" stroke="currentColor" stroke-width="1.500" stroke-linecap="round"/></svg><span class="tx" style="font-size:14px;letter-spacing:-0.031px;">Attachment</span></div><div class="chip" style="left:1060px;top:860px;width:103px"><svg class="ic" viewBox="0 0 16 16"><path d="M5.900 1.600l-2 12.800M12 1.600l-2 12.800M2 5.500h12.300M1.200 10.500h12.300" fill="none" stroke="currentColor" stroke-width="1.900"/></svg><span class="tx" style="font-size:14px;letter-spacing:-0.124px;">Amount</span></div><svg class="abs" style="left:0;top:0" width="1708" height="901" viewBox="0 0 1708 901"><rect x="537.10" y="179.90" width="136.70" height="45.00" rx="2.900" fill="none" stroke="#ff8000" stroke-width="3.400"/><rect x="537.10" y="231.90" width="622.90" height="116.80" rx="2.900" fill="none" stroke="#ff8000" stroke-width="3.400"/><rect x="537.10" y="363.70" width="699.90" height="194.20" rx="2.900" fill="none" stroke="#ff8000" stroke-width="3.400"/><rect x="537.10" y="571.80" width="699.90" height="238.10" rx="2.900" fill="none" stroke="#ff8000" stroke-width="3.400"/><rect x="537.10" y="820.80" width="699.90" height="72.80" rx="2.900" fill="none" stroke="#ff8000" stroke-width="3.400"/></svg><div class="num" style="left:637px;top:189px">1</div><div class="num" style="left:598px;top:237.5px">2</div><div class="num" style="left:632px;top:368px">3</div><div class="num" style="left:633px;top:575px">4</div><div class="num" style="left:644px;top:826px">5</div><svg class="abs" style="left:0;top:885px" width="16" height="16" viewBox="0 0 16 16"><path d="M0 0V16H15A15 15 0 0 1 0 1z" fill="#0d111b"/><path d="M0 1A15 15 0 0 0 15 16" fill="none" stroke="#9a9a9a" stroke-width="1.600"/><path d="M0 5A11 11 0 0 0 11 16" fill="none" stroke="#666" stroke-width="1"/></svg><svg class="abs" style="left:1692px;top:885px" width="16" height="16" viewBox="0 0 16 16"><path d="M16 0V16H1A15 15 0 0 0 16 1z" fill="#b9b9b9"/><path d="M16 1.500A15 15 0 0 1 1.500 16" fill="none" stroke="#222" stroke-width="1.100"/></svg></div></body></html>
